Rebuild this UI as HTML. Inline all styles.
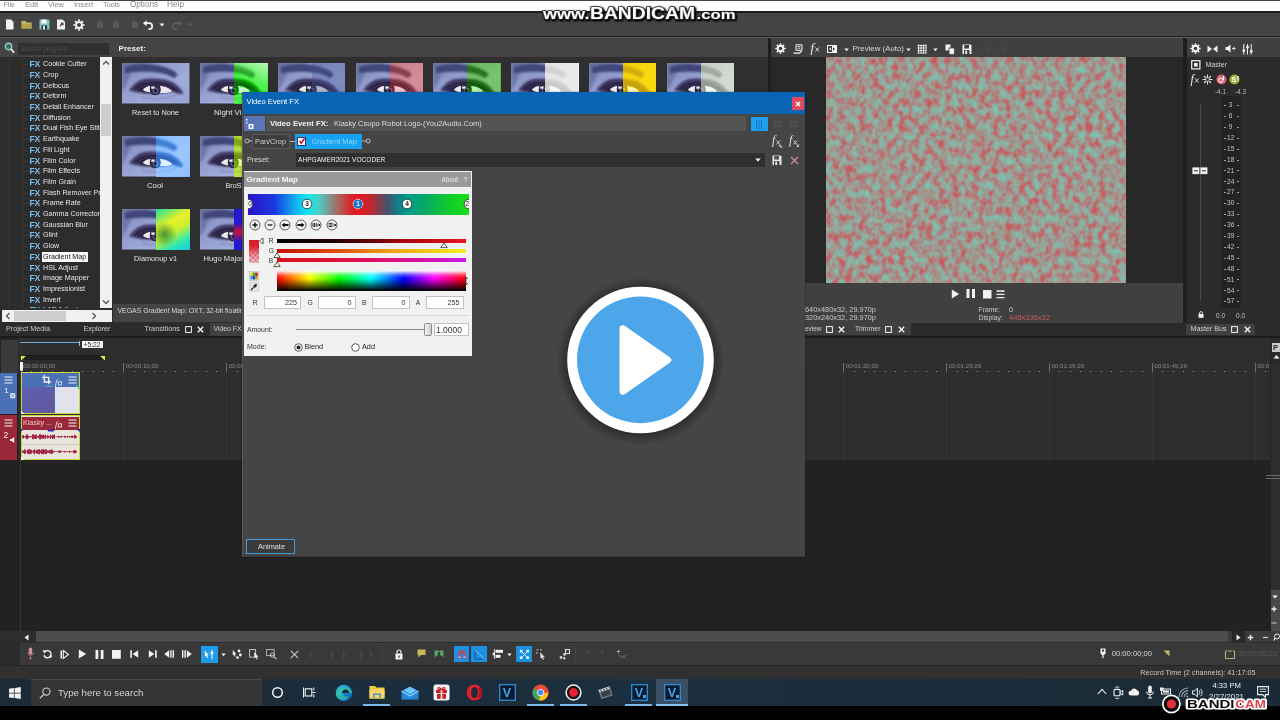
<!DOCTYPE html>
<html><head><meta charset="utf-8"><title>VEGAS Pro - Video Event FX</title>
<style>
html,body{margin:0;padding:0;background:#000;}
body{width:1280px;height:720px;position:relative;overflow:hidden;font-family:"Liberation Sans",sans-serif;}
body div,body span,body svg{position:absolute;}
span{white-space:nowrap;}
svg{overflow:visible;}
#v{left:0;top:0;width:1280px;height:720px;overflow:hidden;filter:blur(0.4px);}
</style></head><body>
<div id="v">
<div style="left:0px;top:0px;width:1280px;height:720px;background:#2d2d2d;"></div>
<div style="left:0px;top:0px;width:1280px;height:11px;background:#ffffff;border-top:1px solid #444;box-sizing:border-box;"></div>
<span style="left:3.5px;top:-0.6px;font-size:7.14px;line-height:12px;color:#858585;">File</span>
<span style="left:25px;top:-0.6px;font-size:7.54px;line-height:12px;color:#858585;">Edit</span>
<span style="left:48px;top:-0.6px;font-size:7.44px;line-height:12px;color:#858585;">View</span>
<span style="left:74px;top:-0.6px;font-size:7.6px;line-height:12px;color:#858585;">Insert</span>
<span style="left:103px;top:-0.6px;font-size:7.28px;line-height:12px;color:#858585;">Tools</span>
<span style="left:130px;top:-0.6px;font-size:8.13px;line-height:12px;color:#858585;">Options</span>
<span style="left:167px;top:-0.6px;font-size:8.27px;line-height:12px;color:#858585;">Help</span>
<div style="left:0px;top:11px;width:1280px;height:1.5px;background:#1c1c1c;"></div>
<div style="left:0px;top:12.5px;width:1280px;height:23.5px;background:#444444;"></div>
<div style="left:0px;top:35.6px;width:1280px;height:1.6px;background:#202020;"></div>
<div style="left:0px;top:37.2px;width:1280px;height:0.9px;background:#5c5c5c;"></div>
<svg style="left:5px;top:19px;" width="10" height="11" viewBox="0 0 10 11"><path d="M1 0.5h5l2.5 2.5v7.5h-7.5z" fill="#f2f2f2"/></svg>
<svg style="left:21px;top:20px;" width="12" height="9" viewBox="0 0 12 9"><path d="M0.5 1h4l1 1.5h5v6h-10z" fill="#c9b75e"/><path d="M0.5 4h10v4.5h-10z" fill="#b5a24c"/></svg>
<svg style="left:39px;top:19px;" width="11" height="11" viewBox="0 0 11 11"><path d="M0.5 0.5h9l1 1v9h-10z" fill="#7fc4c0"/><rect x="2.5" y="0.5" width="5" height="4" fill="#f4f4f4"/><rect x="2.5" y="6.5" width="5.5" height="4" fill="#2e2e2e"/><rect x="4" y="7" width="2" height="3.5" fill="#e8e8e8"/></svg>
<svg style="left:56px;top:19px;" width="11" height="11" viewBox="0 0 11 11"><path d="M1 0.5h5.5l2.5 2.5v7.5h-8z" fill="#f2f2f2"/><path d="M4 7l3-3m0 0h-2.2m2.2 0v2.2" stroke="#444" stroke-width="1.2" fill="none"/></svg>
<svg style="left:73px;top:18.5px;" width="12" height="12" viewBox="0 0 12 12"><g fill="none" stroke="#f2f2f2"><circle cx="6" cy="6" r="3" stroke-width="2"/><g stroke-width="1.7"><path d="M6 0.3v2M6 9.7v2M0.3 6h2M9.7 6h2M2 2l1.4 1.4M8.6 8.6L10 10M2 10l1.4-1.4M8.6 3.4L10 2"/></g></g></svg>
<svg style="left:96px;top:20px;" width="8" height="9" viewBox="0 0 8 9"><path d="M1 1h4l2 2v5h-6z" fill="#5a5a5a"/></svg>
<svg style="left:112px;top:20px;" width="8" height="9" viewBox="0 0 8 9"><path d="M1 1h4l2 2v5h-6z" fill="#5a5a5a"/></svg>
<svg style="left:131px;top:20px;" width="8" height="9" viewBox="0 0 8 9"><path d="M1 1h4l2 2v5h-6z" fill="#5a5a5a"/></svg>
<svg style="left:143px;top:20px;" width="11" height="9" viewBox="0 0 11 9"><path d="M1 3.2h5.2a3 3 0 0 1 0 6h-0.7" fill="none" stroke="#f2f2f2" stroke-width="1.7"/><path d="M0 3.2l3.6-3v6z" fill="#f2f2f2"/></svg>
<svg style="left:159px;top:23px;" width="6" height="4" viewBox="0 0 6 4"><path d="M0.5 0.5h5l-2.5 3z" fill="#f2f2f2"/></svg>
<svg style="left:171px;top:20px;" width="11" height="9" viewBox="0 0 11 9"><path d="M10 3.2h-5.2a3 3 0 0 0 0 6h0.7" fill="none" stroke="#5e5e5e" stroke-width="1.7"/><path d="M11 3.2l-3.6-3v6z" fill="#5e5e5e"/></svg>
<svg style="left:187px;top:23px;" width="6" height="4" viewBox="0 0 6 4"><path d="M0.5 0.5h5l-2.5 3z" fill="#5e5e5e"/></svg>
<div style="left:0px;top:38px;width:769px;height:19px;background:#434343;"></div>
<div style="left:0px;top:57px;width:113px;height:265px;background:#2d2d2d;"></div>
<div style="left:113px;top:57px;width:656px;height:247px;background:#2f2f2f;"></div>
<div style="left:113px;top:303.5px;width:656px;height:18.5px;background:#444444;"></div>
<svg style="left:4px;top:42px;" width="11" height="12" viewBox="0 0 11 12"><circle cx="4.5" cy="4.5" r="3.2" fill="#3d6e68" stroke="#8fd0c8" stroke-width="1.4"/><path d="M7 7.2l3.2 3.4" stroke="#e8e8e8" stroke-width="1.8"/></svg>
<div style="left:18px;top:43px;width:91px;height:12px;background:#303030;"></div>
<span style="left:20px;top:42.5px;font-size:6.76px;line-height:12px;color:#4c4c4c;">Search plug-ins</span>
<span style="left:118.5px;top:42.5px;font-size:8.11px;line-height:12px;color:#f0f0f0;font-weight:bold;">Preset:</span>
<div style="left:9px;top:57px;width:1px;height:251px;background:#3a3a3a;"></div>
<div style="left:22px;top:57px;width:1px;height:251px;background:#3a3a3a;"></div>
<div style="left:0;top:57px;width:100px;height:251px;overflow:hidden">
<div style="left:23px;top:7.2px;width:5px;height:1px;background:#4a3432"></div>
<span style="left:29.5px;top:1.2px;font-size:8.6px;line-height:12px;font-weight:bold;color:#79bfee;letter-spacing:-0.3px">FX</span>
<span style="left:43px;top:1.2px;font-size:7.15px;line-height:12px;color:#e6e6e6">Cookie Cutter</span>
<div style="left:23px;top:17.9px;width:5px;height:1px;background:#4a3432"></div>
<span style="left:29.5px;top:11.9px;font-size:8.6px;line-height:12px;font-weight:bold;color:#79bfee;letter-spacing:-0.3px">FX</span>
<span style="left:43px;top:11.9px;font-size:7.15px;line-height:12px;color:#e6e6e6">Crop</span>
<div style="left:23px;top:28.6px;width:5px;height:1px;background:#4a3432"></div>
<span style="left:29.5px;top:22.6px;font-size:8.6px;line-height:12px;font-weight:bold;color:#79bfee;letter-spacing:-0.3px">FX</span>
<span style="left:43px;top:22.6px;font-size:7.15px;line-height:12px;color:#e6e6e6">Defocus</span>
<div style="left:23px;top:39.3px;width:5px;height:1px;background:#4a3432"></div>
<span style="left:29.5px;top:33.3px;font-size:8.6px;line-height:12px;font-weight:bold;color:#79bfee;letter-spacing:-0.3px">FX</span>
<span style="left:43px;top:33.3px;font-size:7.15px;line-height:12px;color:#e6e6e6">Deform</span>
<div style="left:23px;top:50.0px;width:5px;height:1px;background:#4a3432"></div>
<span style="left:29.5px;top:44.0px;font-size:8.6px;line-height:12px;font-weight:bold;color:#79bfee;letter-spacing:-0.3px">FX</span>
<span style="left:43px;top:44.0px;font-size:7.15px;line-height:12px;color:#e6e6e6">Detail Enhancer</span>
<div style="left:23px;top:60.7px;width:5px;height:1px;background:#4a3432"></div>
<span style="left:29.5px;top:54.7px;font-size:8.6px;line-height:12px;font-weight:bold;color:#79bfee;letter-spacing:-0.3px">FX</span>
<span style="left:43px;top:54.7px;font-size:7.15px;line-height:12px;color:#e6e6e6">Diffusion</span>
<div style="left:23px;top:71.4px;width:5px;height:1px;background:#4a3432"></div>
<span style="left:29.5px;top:65.4px;font-size:8.6px;line-height:12px;font-weight:bold;color:#79bfee;letter-spacing:-0.3px">FX</span>
<span style="left:43px;top:65.4px;font-size:7.15px;line-height:12px;color:#e6e6e6">Dual Fish Eye Stitch</span>
<div style="left:23px;top:82.1px;width:5px;height:1px;background:#4a3432"></div>
<span style="left:29.5px;top:76.1px;font-size:8.6px;line-height:12px;font-weight:bold;color:#79bfee;letter-spacing:-0.3px">FX</span>
<span style="left:43px;top:76.1px;font-size:7.15px;line-height:12px;color:#e6e6e6">Earthquake</span>
<div style="left:23px;top:92.8px;width:5px;height:1px;background:#4a3432"></div>
<span style="left:29.5px;top:86.8px;font-size:8.6px;line-height:12px;font-weight:bold;color:#79bfee;letter-spacing:-0.3px">FX</span>
<span style="left:43px;top:86.8px;font-size:7.15px;line-height:12px;color:#e6e6e6">Fill Light</span>
<div style="left:23px;top:103.5px;width:5px;height:1px;background:#4a3432"></div>
<span style="left:29.5px;top:97.5px;font-size:8.6px;line-height:12px;font-weight:bold;color:#79bfee;letter-spacing:-0.3px">FX</span>
<span style="left:43px;top:97.5px;font-size:7.15px;line-height:12px;color:#e6e6e6">Film Color</span>
<div style="left:23px;top:114.2px;width:5px;height:1px;background:#4a3432"></div>
<span style="left:29.5px;top:108.2px;font-size:8.6px;line-height:12px;font-weight:bold;color:#79bfee;letter-spacing:-0.3px">FX</span>
<span style="left:43px;top:108.2px;font-size:7.15px;line-height:12px;color:#e6e6e6">Film Effects</span>
<div style="left:23px;top:124.9px;width:5px;height:1px;background:#4a3432"></div>
<span style="left:29.5px;top:118.9px;font-size:8.6px;line-height:12px;font-weight:bold;color:#79bfee;letter-spacing:-0.3px">FX</span>
<span style="left:43px;top:118.9px;font-size:7.15px;line-height:12px;color:#e6e6e6">Film Grain</span>
<div style="left:23px;top:135.6px;width:5px;height:1px;background:#4a3432"></div>
<span style="left:29.5px;top:129.6px;font-size:8.6px;line-height:12px;font-weight:bold;color:#79bfee;letter-spacing:-0.3px">FX</span>
<span style="left:43px;top:129.6px;font-size:7.15px;line-height:12px;color:#e6e6e6">Flash Remover Pro</span>
<div style="left:23px;top:146.3px;width:5px;height:1px;background:#4a3432"></div>
<span style="left:29.5px;top:140.3px;font-size:8.6px;line-height:12px;font-weight:bold;color:#79bfee;letter-spacing:-0.3px">FX</span>
<span style="left:43px;top:140.3px;font-size:7.15px;line-height:12px;color:#e6e6e6">Frame Rate</span>
<div style="left:23px;top:157.0px;width:5px;height:1px;background:#4a3432"></div>
<span style="left:29.5px;top:151.0px;font-size:8.6px;line-height:12px;font-weight:bold;color:#79bfee;letter-spacing:-0.3px">FX</span>
<span style="left:43px;top:151.0px;font-size:7.15px;line-height:12px;color:#e6e6e6">Gamma Corrector</span>
<div style="left:23px;top:167.7px;width:5px;height:1px;background:#4a3432"></div>
<span style="left:29.5px;top:161.7px;font-size:8.6px;line-height:12px;font-weight:bold;color:#79bfee;letter-spacing:-0.3px">FX</span>
<span style="left:43px;top:161.7px;font-size:7.15px;line-height:12px;color:#e6e6e6">Gaussian Blur</span>
<div style="left:23px;top:178.4px;width:5px;height:1px;background:#4a3432"></div>
<span style="left:29.5px;top:172.4px;font-size:8.6px;line-height:12px;font-weight:bold;color:#79bfee;letter-spacing:-0.3px">FX</span>
<span style="left:43px;top:172.4px;font-size:7.15px;line-height:12px;color:#e6e6e6">Glint</span>
<div style="left:23px;top:189.1px;width:5px;height:1px;background:#4a3432"></div>
<span style="left:29.5px;top:183.1px;font-size:8.6px;line-height:12px;font-weight:bold;color:#79bfee;letter-spacing:-0.3px">FX</span>
<span style="left:43px;top:183.1px;font-size:7.15px;line-height:12px;color:#e6e6e6">Glow</span>
<div style="left:23px;top:199.8px;width:5px;height:1px;background:#4a3432"></div>
<div style="left:42px;top:194.8px;width:46px;height:10.5px;background:#fafafa"></div>
<span style="left:29.5px;top:193.8px;font-size:8.6px;line-height:12px;font-weight:bold;color:#79bfee;letter-spacing:-0.3px">FX</span>
<span style="left:43px;top:193.8px;font-size:7.15px;line-height:12px;color:#111">Gradient Map</span>
<div style="left:23px;top:210.5px;width:5px;height:1px;background:#4a3432"></div>
<span style="left:29.5px;top:204.5px;font-size:8.6px;line-height:12px;font-weight:bold;color:#79bfee;letter-spacing:-0.3px">FX</span>
<span style="left:43px;top:204.5px;font-size:7.15px;line-height:12px;color:#e6e6e6">HSL Adjust</span>
<div style="left:23px;top:221.2px;width:5px;height:1px;background:#4a3432"></div>
<span style="left:29.5px;top:215.2px;font-size:8.6px;line-height:12px;font-weight:bold;color:#79bfee;letter-spacing:-0.3px">FX</span>
<span style="left:43px;top:215.2px;font-size:7.15px;line-height:12px;color:#e6e6e6">Image Mapper</span>
<div style="left:23px;top:231.9px;width:5px;height:1px;background:#4a3432"></div>
<span style="left:29.5px;top:225.9px;font-size:8.6px;line-height:12px;font-weight:bold;color:#79bfee;letter-spacing:-0.3px">FX</span>
<span style="left:43px;top:225.9px;font-size:7.15px;line-height:12px;color:#e6e6e6">Impressionist</span>
<div style="left:23px;top:242.6px;width:5px;height:1px;background:#4a3432"></div>
<span style="left:29.5px;top:236.6px;font-size:8.6px;line-height:12px;font-weight:bold;color:#79bfee;letter-spacing:-0.3px">FX</span>
<span style="left:43px;top:236.6px;font-size:7.15px;line-height:12px;color:#e6e6e6">Invert</span>
<div style="left:23px;top:253.3px;width:5px;height:1px;background:#4a3432"></div>
<span style="left:29.5px;top:247.3px;font-size:8.6px;line-height:12px;font-weight:bold;color:#79bfee;letter-spacing:-0.3px">FX</span>
<span style="left:43px;top:247.3px;font-size:7.15px;line-height:12px;color:#e6e6e6">LAB Adjust</span>
</div>
<div style="left:100px;top:57px;width:12px;height:251px;background:#f1f1f1;"></div>
<div style="left:101px;top:104px;width:10px;height:32px;background:#cdcdcd;"></div>
<svg style="left:102px;top:60px;" width="8" height="6" viewBox="0 0 8 6"><path d="M1 4.5l3-3 3 3" fill="none" stroke="#555" stroke-width="1.3"/></svg>
<svg style="left:102px;top:299px;" width="8" height="6" viewBox="0 0 8 6"><path d="M1 1.5l3 3 3-3" fill="none" stroke="#555" stroke-width="1.3"/></svg>
<div style="left:2px;top:310px;width:110px;height:12px;background:#f1f1f1;"></div>
<div style="left:14px;top:311px;width:52px;height:10px;background:#cdcdcd;"></div>
<svg style="left:5px;top:312px;" width="6" height="8" viewBox="0 0 6 8"><path d="M4.5 1l-3 3 3 3" fill="none" stroke="#555" stroke-width="1.3"/></svg>
<svg style="left:91px;top:312px;" width="6" height="8" viewBox="0 0 6 8"><path d="M1.5 1l3 3-3 3" fill="none" stroke="#555" stroke-width="1.3"/></svg>
<span style="left:117.5px;top:304.5px;font-size:6.9px;line-height:12px;color:#d8d8d8;">VEGAS Gradient Map: OXT, 32-bit floating point, GPU Accelerated</span>
<svg width="0" height="0" style="left:0;top:0"><defs>
<linearGradient id="eg" x1="0" y1="0" x2="1" y2="0.9"><stop offset="0" stop-color="#76809f"/><stop offset="0.3" stop-color="#8f9acb"/><stop offset="0.7" stop-color="#a0acda"/><stop offset="1" stop-color="#97a3d4"/></linearGradient>
<filter id="eb" x="-10%" y="-10%" width="120%" height="120%"><feGaussianBlur stdDeviation="1.1"/></filter>
<filter id="eb2" x="-10%" y="-10%" width="120%" height="120%"><feGaussianBlur stdDeviation="0.5"/></filter>
</defs></svg>
<div style="left:122.4px;top:63px;width:67.5px;height:40.5px;overflow:hidden;isolation:isolate"><svg width="67.5" height="40.5" viewBox="0 0 68 40" preserveAspectRatio="none" style="left:0;top:0">
<rect width="68" height="40" fill="url(#eg)"/>
<g filter="url(#eb)">
<path d="M0 0h30l-20 8l-6 14l-4 6z" fill="#5a6498" opacity="0.55"/>
<path d="M3 4c10-4 28-4 40 0s12 6 13 8l-4 3c-8-6-24-8-49-5z" fill="#40457a" opacity="1"/>
<path d="M7 27c5-7 11-11 18-11.500s19-0.500 26 3.500s9 8 11 11c-5 1.500-9-0.500-13-3c-10 4-28 5-42 0z" fill="#38305c" opacity="0.95"/>
<path d="M14 26c7-6 28-7 40 1c-8 4-30 5-40-1z" fill="#2c2644"/>
<path d="M20 34c10 2 24 2 36-3" fill="none" stroke="#7680b4" stroke-width="2" opacity="0.6"/>
</g>
<g filter="url(#eb2)">
<path d="M21 26.500c2-2.500 4.500-3.500 7.500-3.800l0 6.300c-3 0-6-1-7.500-2.500z" fill="#f1ebee"/>
<path d="M38 22.800c5 0 10 2.200 12.500 5c-3.500 1.800-8 2.200-12.500 1.800z" fill="#ece6ec"/>
<circle cx="33.500" cy="26.300" r="5.600" fill="#2a2a46"/>
<circle cx="33.800" cy="27.300" r="3" fill="#565c86"/>
<circle cx="33.800" cy="27.300" r="1.500" fill="#1c1a2c"/>
<path d="M29.500 23.200l4 0-1.500 2.200-2.500 0z" fill="#f4f0f4"/>
<path d="M13 25.500c8-7.500 30-8.500 42 1.500" fill="none" stroke="#2a2240" stroke-width="1.700"/>
</g>
</svg></div>
<div style="left:200.15px;top:63px;width:67.5px;height:40.5px;overflow:hidden;isolation:isolate"><svg width="67.5" height="40.5" viewBox="0 0 68 40" preserveAspectRatio="none" style="left:0;top:0">
<rect width="68" height="40" fill="url(#eg)"/>
<g filter="url(#eb)">
<path d="M0 0h30l-20 8l-6 14l-4 6z" fill="#5a6498" opacity="0.55"/>
<path d="M3 4c10-4 28-4 40 0s12 6 13 8l-4 3c-8-6-24-8-49-5z" fill="#40457a" opacity="1"/>
<path d="M7 27c5-7 11-11 18-11.500s19-0.500 26 3.500s9 8 11 11c-5 1.500-9-0.500-13-3c-10 4-28 5-42 0z" fill="#38305c" opacity="0.95"/>
<path d="M14 26c7-6 28-7 40 1c-8 4-30 5-40-1z" fill="#2c2644"/>
<path d="M20 34c10 2 24 2 36-3" fill="none" stroke="#7680b4" stroke-width="2" opacity="0.6"/>
</g>
<g filter="url(#eb2)">
<path d="M21 26.500c2-2.500 4.500-3.500 7.500-3.800l0 6.300c-3 0-6-1-7.500-2.500z" fill="#f1ebee"/>
<path d="M38 22.800c5 0 10 2.200 12.500 5c-3.500 1.800-8 2.200-12.500 1.800z" fill="#ece6ec"/>
<circle cx="33.500" cy="26.300" r="5.600" fill="#2a2a46"/>
<circle cx="33.800" cy="27.300" r="3" fill="#565c86"/>
<circle cx="33.800" cy="27.300" r="1.500" fill="#1c1a2c"/>
<path d="M29.500 23.200l4 0-1.500 2.200-2.500 0z" fill="#f4f0f4"/>
<path d="M13 25.500c8-7.500 30-8.500 42 1.500" fill="none" stroke="#2a2240" stroke-width="1.700"/>
</g>
</svg><div style="left:34px;top:0;width:33.5px;height:40.5px;background:#22cc22;mix-blend-mode:color"></div><div style="left:34px;top:0;width:33.5px;height:40.5px;background:rgba(60,230,60,0.2);mix-blend-mode:screen"></div><div style="left:34px;top:0;width:33.5px;height:40.5px;background:linear-gradient(200deg,rgba(255,255,255,0.6),rgba(255,255,255,0) 45%);mix-blend-mode:normal"></div></div>
<div style="left:277.9px;top:63px;width:67.5px;height:40.5px;overflow:hidden;isolation:isolate"><svg width="67.5" height="40.5" viewBox="0 0 68 40" preserveAspectRatio="none" style="left:0;top:0">
<rect width="68" height="40" fill="url(#eg)"/>
<g filter="url(#eb)">
<path d="M0 0h30l-20 8l-6 14l-4 6z" fill="#5a6498" opacity="0.55"/>
<path d="M3 4c10-4 28-4 40 0s12 6 13 8l-4 3c-8-6-24-8-49-5z" fill="#40457a" opacity="1"/>
<path d="M7 27c5-7 11-11 18-11.500s19-0.500 26 3.500s9 8 11 11c-5 1.500-9-0.500-13-3c-10 4-28 5-42 0z" fill="#38305c" opacity="0.95"/>
<path d="M14 26c7-6 28-7 40 1c-8 4-30 5-40-1z" fill="#2c2644"/>
<path d="M20 34c10 2 24 2 36-3" fill="none" stroke="#7680b4" stroke-width="2" opacity="0.6"/>
</g>
<g filter="url(#eb2)">
<path d="M21 26.500c2-2.500 4.500-3.500 7.500-3.800l0 6.300c-3 0-6-1-7.500-2.500z" fill="#f1ebee"/>
<path d="M38 22.800c5 0 10 2.200 12.500 5c-3.500 1.800-8 2.200-12.500 1.800z" fill="#ece6ec"/>
<circle cx="33.500" cy="26.300" r="5.600" fill="#2a2a46"/>
<circle cx="33.800" cy="27.300" r="3" fill="#565c86"/>
<circle cx="33.800" cy="27.300" r="1.500" fill="#1c1a2c"/>
<path d="M29.500 23.200l4 0-1.500 2.200-2.500 0z" fill="#f4f0f4"/>
<path d="M13 25.500c8-7.500 30-8.500 42 1.500" fill="none" stroke="#2a2240" stroke-width="1.700"/>
</g>
</svg><div style="left:34px;top:0;width:33.5px;height:40.5px;background:rgba(70,84,150,0.35);mix-blend-mode:normal"></div></div>
<div style="left:355.65px;top:63px;width:67.5px;height:40.5px;overflow:hidden;isolation:isolate"><svg width="67.5" height="40.5" viewBox="0 0 68 40" preserveAspectRatio="none" style="left:0;top:0">
<rect width="68" height="40" fill="url(#eg)"/>
<g filter="url(#eb)">
<path d="M0 0h30l-20 8l-6 14l-4 6z" fill="#5a6498" opacity="0.55"/>
<path d="M3 4c10-4 28-4 40 0s12 6 13 8l-4 3c-8-6-24-8-49-5z" fill="#40457a" opacity="1"/>
<path d="M7 27c5-7 11-11 18-11.500s19-0.500 26 3.500s9 8 11 11c-5 1.500-9-0.500-13-3c-10 4-28 5-42 0z" fill="#38305c" opacity="0.95"/>
<path d="M14 26c7-6 28-7 40 1c-8 4-30 5-40-1z" fill="#2c2644"/>
<path d="M20 34c10 2 24 2 36-3" fill="none" stroke="#7680b4" stroke-width="2" opacity="0.6"/>
</g>
<g filter="url(#eb2)">
<path d="M21 26.500c2-2.500 4.500-3.500 7.500-3.800l0 6.300c-3 0-6-1-7.500-2.500z" fill="#f1ebee"/>
<path d="M38 22.800c5 0 10 2.200 12.500 5c-3.500 1.800-8 2.200-12.500 1.800z" fill="#ece6ec"/>
<circle cx="33.500" cy="26.300" r="5.600" fill="#2a2a46"/>
<circle cx="33.800" cy="27.300" r="3" fill="#565c86"/>
<circle cx="33.800" cy="27.300" r="1.500" fill="#1c1a2c"/>
<path d="M29.500 23.200l4 0-1.500 2.200-2.500 0z" fill="#f4f0f4"/>
<path d="M13 25.500c8-7.500 30-8.500 42 1.500" fill="none" stroke="#2a2240" stroke-width="1.700"/>
</g>
</svg><div style="left:34px;top:0;width:33.5px;height:40.5px;background:#a86070;mix-blend-mode:color"></div><div style="left:34px;top:0;width:33.5px;height:40.5px;background:rgba(180,104,118,0.22);mix-blend-mode:normal"></div></div>
<div style="left:433.4px;top:63px;width:67.5px;height:40.5px;overflow:hidden;isolation:isolate"><svg width="67.5" height="40.5" viewBox="0 0 68 40" preserveAspectRatio="none" style="left:0;top:0">
<rect width="68" height="40" fill="url(#eg)"/>
<g filter="url(#eb)">
<path d="M0 0h30l-20 8l-6 14l-4 6z" fill="#5a6498" opacity="0.55"/>
<path d="M3 4c10-4 28-4 40 0s12 6 13 8l-4 3c-8-6-24-8-49-5z" fill="#40457a" opacity="1"/>
<path d="M7 27c5-7 11-11 18-11.500s19-0.500 26 3.500s9 8 11 11c-5 1.500-9-0.500-13-3c-10 4-28 5-42 0z" fill="#38305c" opacity="0.95"/>
<path d="M14 26c7-6 28-7 40 1c-8 4-30 5-40-1z" fill="#2c2644"/>
<path d="M20 34c10 2 24 2 36-3" fill="none" stroke="#7680b4" stroke-width="2" opacity="0.6"/>
</g>
<g filter="url(#eb2)">
<path d="M21 26.500c2-2.500 4.500-3.500 7.500-3.800l0 6.300c-3 0-6-1-7.500-2.500z" fill="#f1ebee"/>
<path d="M38 22.800c5 0 10 2.200 12.500 5c-3.500 1.800-8 2.200-12.500 1.800z" fill="#ece6ec"/>
<circle cx="33.500" cy="26.300" r="5.600" fill="#2a2a46"/>
<circle cx="33.800" cy="27.300" r="3" fill="#565c86"/>
<circle cx="33.800" cy="27.300" r="1.500" fill="#1c1a2c"/>
<path d="M29.500 23.200l4 0-1.500 2.200-2.500 0z" fill="#f4f0f4"/>
<path d="M13 25.500c8-7.500 30-8.500 42 1.500" fill="none" stroke="#2a2240" stroke-width="1.700"/>
</g>
</svg><div style="left:34px;top:0;width:33.5px;height:40.5px;background:#4f9a45;mix-blend-mode:color"></div><div style="left:34px;top:0;width:33.5px;height:40.5px;background:rgba(90,160,80,0.18);mix-blend-mode:normal"></div></div>
<div style="left:511.15px;top:63px;width:67.5px;height:40.5px;overflow:hidden;isolation:isolate"><svg width="67.5" height="40.5" viewBox="0 0 68 40" preserveAspectRatio="none" style="left:0;top:0">
<rect width="68" height="40" fill="url(#eg)"/>
<g filter="url(#eb)">
<path d="M0 0h30l-20 8l-6 14l-4 6z" fill="#5a6498" opacity="0.55"/>
<path d="M3 4c10-4 28-4 40 0s12 6 13 8l-4 3c-8-6-24-8-49-5z" fill="#40457a" opacity="1"/>
<path d="M7 27c5-7 11-11 18-11.500s19-0.500 26 3.500s9 8 11 11c-5 1.500-9-0.500-13-3c-10 4-28 5-42 0z" fill="#38305c" opacity="0.95"/>
<path d="M14 26c7-6 28-7 40 1c-8 4-30 5-40-1z" fill="#2c2644"/>
<path d="M20 34c10 2 24 2 36-3" fill="none" stroke="#7680b4" stroke-width="2" opacity="0.6"/>
</g>
<g filter="url(#eb2)">
<path d="M21 26.500c2-2.500 4.500-3.500 7.500-3.800l0 6.300c-3 0-6-1-7.500-2.500z" fill="#f1ebee"/>
<path d="M38 22.800c5 0 10 2.200 12.500 5c-3.500 1.800-8 2.200-12.500 1.800z" fill="#ece6ec"/>
<circle cx="33.500" cy="26.300" r="5.600" fill="#2a2a46"/>
<circle cx="33.800" cy="27.300" r="3" fill="#565c86"/>
<circle cx="33.800" cy="27.300" r="1.500" fill="#1c1a2c"/>
<path d="M29.500 23.200l4 0-1.500 2.200-2.500 0z" fill="#f4f0f4"/>
<path d="M13 25.500c8-7.500 30-8.500 42 1.500" fill="none" stroke="#2a2240" stroke-width="1.700"/>
</g>
</svg><div style="left:34px;top:0;width:33.5px;height:40.5px;background:#ffffff;mix-blend-mode:color"></div><div style="left:34px;top:0;width:33.5px;height:40.5px;background:rgba(255,255,255,0.75);mix-blend-mode:screen"></div></div>
<div style="left:588.9px;top:63px;width:67.5px;height:40.5px;overflow:hidden;isolation:isolate"><svg width="67.5" height="40.5" viewBox="0 0 68 40" preserveAspectRatio="none" style="left:0;top:0">
<rect width="68" height="40" fill="url(#eg)"/>
<g filter="url(#eb)">
<path d="M0 0h30l-20 8l-6 14l-4 6z" fill="#5a6498" opacity="0.55"/>
<path d="M3 4c10-4 28-4 40 0s12 6 13 8l-4 3c-8-6-24-8-49-5z" fill="#40457a" opacity="1"/>
<path d="M7 27c5-7 11-11 18-11.500s19-0.500 26 3.500s9 8 11 11c-5 1.500-9-0.500-13-3c-10 4-28 5-42 0z" fill="#38305c" opacity="0.95"/>
<path d="M14 26c7-6 28-7 40 1c-8 4-30 5-40-1z" fill="#2c2644"/>
<path d="M20 34c10 2 24 2 36-3" fill="none" stroke="#7680b4" stroke-width="2" opacity="0.6"/>
</g>
<g filter="url(#eb2)">
<path d="M21 26.500c2-2.500 4.500-3.500 7.500-3.800l0 6.300c-3 0-6-1-7.500-2.500z" fill="#f1ebee"/>
<path d="M38 22.800c5 0 10 2.200 12.500 5c-3.500 1.800-8 2.200-12.500 1.800z" fill="#ece6ec"/>
<circle cx="33.500" cy="26.300" r="5.600" fill="#2a2a46"/>
<circle cx="33.800" cy="27.300" r="3" fill="#565c86"/>
<circle cx="33.800" cy="27.300" r="1.500" fill="#1c1a2c"/>
<path d="M29.500 23.200l4 0-1.500 2.200-2.500 0z" fill="#f4f0f4"/>
<path d="M13 25.500c8-7.500 30-8.500 42 1.500" fill="none" stroke="#2a2240" stroke-width="1.700"/>
</g>
</svg><div style="left:34px;top:0;width:33.5px;height:40.5px;background:#ffbe10;mix-blend-mode:color"></div><div style="left:34px;top:0;width:33.5px;height:40.5px;background:rgba(255,200,20,0.7);mix-blend-mode:screen"></div></div>
<div style="left:666.65px;top:63px;width:67.5px;height:40.5px;overflow:hidden;isolation:isolate"><svg width="67.5" height="40.5" viewBox="0 0 68 40" preserveAspectRatio="none" style="left:0;top:0">
<rect width="68" height="40" fill="url(#eg)"/>
<g filter="url(#eb)">
<path d="M0 0h30l-20 8l-6 14l-4 6z" fill="#5a6498" opacity="0.55"/>
<path d="M3 4c10-4 28-4 40 0s12 6 13 8l-4 3c-8-6-24-8-49-5z" fill="#40457a" opacity="1"/>
<path d="M7 27c5-7 11-11 18-11.500s19-0.500 26 3.500s9 8 11 11c-5 1.500-9-0.500-13-3c-10 4-28 5-42 0z" fill="#38305c" opacity="0.95"/>
<path d="M14 26c7-6 28-7 40 1c-8 4-30 5-40-1z" fill="#2c2644"/>
<path d="M20 34c10 2 24 2 36-3" fill="none" stroke="#7680b4" stroke-width="2" opacity="0.6"/>
</g>
<g filter="url(#eb2)">
<path d="M21 26.500c2-2.500 4.500-3.500 7.500-3.800l0 6.300c-3 0-6-1-7.500-2.500z" fill="#f1ebee"/>
<path d="M38 22.800c5 0 10 2.200 12.500 5c-3.500 1.800-8 2.200-12.500 1.800z" fill="#ece6ec"/>
<circle cx="33.500" cy="26.300" r="5.600" fill="#2a2a46"/>
<circle cx="33.800" cy="27.300" r="3" fill="#565c86"/>
<circle cx="33.800" cy="27.300" r="1.500" fill="#1c1a2c"/>
<path d="M29.500 23.200l4 0-1.500 2.200-2.500 0z" fill="#f4f0f4"/>
<path d="M13 25.500c8-7.500 30-8.500 42 1.500" fill="none" stroke="#2a2240" stroke-width="1.700"/>
</g>
</svg><div style="left:34px;top:0;width:33.5px;height:40.5px;background:#e0e8e0;mix-blend-mode:color"></div><div style="left:34px;top:0;width:33.5px;height:40.5px;background:rgba(232,240,232,0.55);mix-blend-mode:screen"></div></div>
<div style="left:122.4px;top:136px;width:67.5px;height:40.5px;overflow:hidden;isolation:isolate"><svg width="67.5" height="40.5" viewBox="0 0 68 40" preserveAspectRatio="none" style="left:0;top:0">
<rect width="68" height="40" fill="url(#eg)"/>
<g filter="url(#eb)">
<path d="M0 0h30l-20 8l-6 14l-4 6z" fill="#5a6498" opacity="0.55"/>
<path d="M3 4c10-4 28-4 40 0s12 6 13 8l-4 3c-8-6-24-8-49-5z" fill="#40457a" opacity="1"/>
<path d="M7 27c5-7 11-11 18-11.500s19-0.500 26 3.500s9 8 11 11c-5 1.500-9-0.500-13-3c-10 4-28 5-42 0z" fill="#38305c" opacity="0.95"/>
<path d="M14 26c7-6 28-7 40 1c-8 4-30 5-40-1z" fill="#2c2644"/>
<path d="M20 34c10 2 24 2 36-3" fill="none" stroke="#7680b4" stroke-width="2" opacity="0.6"/>
</g>
<g filter="url(#eb2)">
<path d="M21 26.500c2-2.500 4.500-3.500 7.500-3.800l0 6.300c-3 0-6-1-7.500-2.500z" fill="#f1ebee"/>
<path d="M38 22.800c5 0 10 2.200 12.500 5c-3.500 1.800-8 2.200-12.500 1.800z" fill="#ece6ec"/>
<circle cx="33.500" cy="26.300" r="5.600" fill="#2a2a46"/>
<circle cx="33.800" cy="27.300" r="3" fill="#565c86"/>
<circle cx="33.800" cy="27.300" r="1.500" fill="#1c1a2c"/>
<path d="M29.500 23.200l4 0-1.500 2.200-2.500 0z" fill="#f4f0f4"/>
<path d="M13 25.500c8-7.500 30-8.500 42 1.500" fill="none" stroke="#2a2240" stroke-width="1.700"/>
</g>
</svg><div style="left:34px;top:0;width:33.5px;height:40.5px;background:#5c96ff;mix-blend-mode:color"></div><div style="left:34px;top:0;width:33.5px;height:40.5px;background:rgba(120,175,255,0.4);mix-blend-mode:screen"></div></div>
<div style="left:200.15px;top:136px;width:67.5px;height:40.5px;overflow:hidden;isolation:isolate"><svg width="67.5" height="40.5" viewBox="0 0 68 40" preserveAspectRatio="none" style="left:0;top:0">
<rect width="68" height="40" fill="url(#eg)"/>
<g filter="url(#eb)">
<path d="M0 0h30l-20 8l-6 14l-4 6z" fill="#5a6498" opacity="0.55"/>
<path d="M3 4c10-4 28-4 40 0s12 6 13 8l-4 3c-8-6-24-8-49-5z" fill="#40457a" opacity="1"/>
<path d="M7 27c5-7 11-11 18-11.500s19-0.500 26 3.500s9 8 11 11c-5 1.500-9-0.500-13-3c-10 4-28 5-42 0z" fill="#38305c" opacity="0.95"/>
<path d="M14 26c7-6 28-7 40 1c-8 4-30 5-40-1z" fill="#2c2644"/>
<path d="M20 34c10 2 24 2 36-3" fill="none" stroke="#7680b4" stroke-width="2" opacity="0.6"/>
</g>
<g filter="url(#eb2)">
<path d="M21 26.500c2-2.500 4.500-3.500 7.500-3.800l0 6.300c-3 0-6-1-7.500-2.500z" fill="#f1ebee"/>
<path d="M38 22.800c5 0 10 2.200 12.500 5c-3.500 1.800-8 2.200-12.500 1.800z" fill="#ece6ec"/>
<circle cx="33.500" cy="26.300" r="5.600" fill="#2a2a46"/>
<circle cx="33.800" cy="27.300" r="3" fill="#565c86"/>
<circle cx="33.800" cy="27.300" r="1.500" fill="#1c1a2c"/>
<path d="M29.500 23.200l4 0-1.500 2.200-2.500 0z" fill="#f4f0f4"/>
<path d="M13 25.500c8-7.500 30-8.500 42 1.500" fill="none" stroke="#2a2240" stroke-width="1.700"/>
</g>
</svg><div style="left:34px;top:0;width:33.5px;height:40.5px;background:#a6dc3c;mix-blend-mode:color"></div><div style="left:34px;top:0;width:33.5px;height:40.5px;background:rgba(170,225,60,0.5);mix-blend-mode:screen"></div></div>
<div style="left:122.4px;top:209px;width:67.5px;height:40.5px;overflow:hidden;isolation:isolate"><svg width="67.5" height="40.5" viewBox="0 0 68 40" preserveAspectRatio="none" style="left:0;top:0">
<rect width="68" height="40" fill="url(#eg)"/>
<g filter="url(#eb)">
<path d="M0 0h30l-20 8l-6 14l-4 6z" fill="#5a6498" opacity="0.55"/>
<path d="M3 4c10-4 28-4 40 0s12 6 13 8l-4 3c-8-6-24-8-49-5z" fill="#40457a" opacity="1"/>
<path d="M7 27c5-7 11-11 18-11.500s19-0.500 26 3.500s9 8 11 11c-5 1.500-9-0.500-13-3c-10 4-28 5-42 0z" fill="#38305c" opacity="0.95"/>
<path d="M14 26c7-6 28-7 40 1c-8 4-30 5-40-1z" fill="#2c2644"/>
<path d="M20 34c10 2 24 2 36-3" fill="none" stroke="#7680b4" stroke-width="2" opacity="0.6"/>
</g>
<g filter="url(#eb2)">
<path d="M21 26.500c2-2.500 4.500-3.500 7.500-3.800l0 6.300c-3 0-6-1-7.500-2.500z" fill="#f1ebee"/>
<path d="M38 22.800c5 0 10 2.200 12.500 5c-3.500 1.800-8 2.200-12.500 1.800z" fill="#ece6ec"/>
<circle cx="33.500" cy="26.300" r="5.600" fill="#2a2a46"/>
<circle cx="33.800" cy="27.300" r="3" fill="#565c86"/>
<circle cx="33.800" cy="27.300" r="1.500" fill="#1c1a2c"/>
<path d="M29.500 23.200l4 0-1.500 2.200-2.500 0z" fill="#f4f0f4"/>
<path d="M13 25.500c8-7.500 30-8.500 42 1.500" fill="none" stroke="#2a2240" stroke-width="1.700"/>
</g>
</svg><div style="left:34px;top:0;width:33.5px;height:40.5px;background:linear-gradient(150deg,#18e0a0 0%,#e8f028 35%,#c8f030 55%,#30e8b0 78%,#18c8e8 100%);mix-blend-mode:normal"></div><div style="left:34px;top:0;width:33.5px;height:40.5px;background:radial-gradient(ellipse at 25% 62%,rgba(20,120,60,0.75) 0%,rgba(20,120,60,0) 35%);mix-blend-mode:normal"></div></div>
<div style="left:200.15px;top:209px;width:67.5px;height:40.5px;overflow:hidden;isolation:isolate"><svg width="67.5" height="40.5" viewBox="0 0 68 40" preserveAspectRatio="none" style="left:0;top:0">
<rect width="68" height="40" fill="url(#eg)"/>
<g filter="url(#eb)">
<path d="M0 0h30l-20 8l-6 14l-4 6z" fill="#5a6498" opacity="0.55"/>
<path d="M3 4c10-4 28-4 40 0s12 6 13 8l-4 3c-8-6-24-8-49-5z" fill="#40457a" opacity="1"/>
<path d="M7 27c5-7 11-11 18-11.500s19-0.500 26 3.500s9 8 11 11c-5 1.500-9-0.500-13-3c-10 4-28 5-42 0z" fill="#38305c" opacity="0.95"/>
<path d="M14 26c7-6 28-7 40 1c-8 4-30 5-40-1z" fill="#2c2644"/>
<path d="M20 34c10 2 24 2 36-3" fill="none" stroke="#7680b4" stroke-width="2" opacity="0.6"/>
</g>
<g filter="url(#eb2)">
<path d="M21 26.500c2-2.500 4.500-3.500 7.500-3.800l0 6.300c-3 0-6-1-7.500-2.500z" fill="#f1ebee"/>
<path d="M38 22.800c5 0 10 2.200 12.500 5c-3.500 1.800-8 2.200-12.500 1.800z" fill="#ece6ec"/>
<circle cx="33.500" cy="26.300" r="5.600" fill="#2a2a46"/>
<circle cx="33.800" cy="27.300" r="3" fill="#565c86"/>
<circle cx="33.800" cy="27.300" r="1.500" fill="#1c1a2c"/>
<path d="M29.500 23.200l4 0-1.500 2.200-2.500 0z" fill="#f4f0f4"/>
<path d="M13 25.500c8-7.500 30-8.500 42 1.500" fill="none" stroke="#2a2240" stroke-width="1.700"/>
</g>
</svg><div style="left:34px;top:0;width:33.5px;height:40.5px;background:linear-gradient(180deg,#2418d0 0%,#2418d0 35%,#d01030 55%,#2418d0 80%);mix-blend-mode:normal"></div></div>
<span style="left:132.0px;top:107.0px;font-size:7.35px;line-height:12px;color:#e2e2e2;">Reset to None</span>
<span style="left:214px;top:107.0px;font-size:7.9px;line-height:12px;color:#e2e2e2;">Night Vision</span>
<span style="left:147.0px;top:180.0px;font-size:7.78px;line-height:12px;color:#e2e2e2;">Cool</span>
<span style="left:225.5px;top:180.0px;font-size:7.3px;line-height:12px;color:#e2e2e2;">BroSis</span>
<span style="left:134.0px;top:253.0px;font-size:7.3px;line-height:12px;color:#e2e2e2;">Diamonup v1</span>
<span style="left:203.5px;top:253.0px;font-size:7.64px;line-height:12px;color:#e2e2e2;">Hugo Major</span>
<div style="left:768px;top:38px;width:3px;height:285px;background:#1e1e1e;"></div>
<div style="left:1183px;top:38px;width:4px;height:285px;background:#1e1e1e;"></div>
<div style="left:771px;top:38px;width:412px;height:19px;background:#404040;"></div>
<div style="left:771px;top:57px;width:412px;height:226px;background:#282828;"></div>
<div style="left:771px;top:282.5px;width:412px;height:40.5px;background:#404040;"></div>
<svg style="left:826px;top:57px" width="300" height="225.5" viewBox="0 0 300 225.5"><defs>
<filter id="nz" x="0" y="0" width="100%" height="100%" color-interpolation-filters="sRGB">
<feTurbulence type="fractalNoise" baseFrequency="0.15 0.12" numOctaves="2" seed="7" result="n"/>
<feColorMatrix in="n" type="matrix" values="1.3 0 0 0 -0.2  1.3 0 0 0 -0.2  1.3 0 0 0 -0.2  0 0 0 0 1" result="m"/>
<feComponentTransfer in="m" result="t"><feFuncR type="table" tableValues="0.47 0.52 0.58 0.65 0.73 0.79 0.82"/><feFuncG type="table" tableValues="0.78 0.72 0.66 0.56 0.44 0.35 0.31"/><feFuncB type="table" tableValues="0.70 0.66 0.61 0.54 0.44 0.36 0.33"/></feComponentTransfer><feGaussianBlur stdDeviation="0.55"/>
</filter></defs><rect width="300" height="225.5" fill="#a08880"/><rect width="300" height="225.5" filter="url(#nz)"/></svg>
<svg style="left:774.5px;top:43px;" width="11" height="11" viewBox="0 0 12 12"><g fill="none" stroke="#f2f2f2"><circle cx="6" cy="6" r="3" stroke-width="2"/><g stroke-width="1.7"><path d="M6 0.3v2M6 9.7v2M0.3 6h2M9.7 6h2M2 2l1.4 1.4M8.6 8.6L10 10M2 10l1.4-1.4M8.6 3.4L10 2"/></g></g></svg>
<svg style="left:792.5px;top:44px;" width="10" height="10" viewBox="0 0 10 10"><path d="M3 0.8h6v5.5h-6z" fill="none" stroke="#f2f2f2" stroke-width="1"/><path d="M4.5 2.5h3M4.5 4.2h3" stroke="#f2f2f2" stroke-width="0.8"/><path d="M0.5 9.2h6l2-2" stroke="#f2f2f2" stroke-width="1.3" fill="none"/></svg>
<svg style="left:810px;top:42px;" width="12" height="13" viewBox="0 0 12 13"><text x="0.5" y="10" font-family="Liberation Serif,serif" font-style="italic" font-size="12.5" fill="#f2f2f2">f</text><path d="M5.5 5.5l3.5 4M9 5.5l-3.5 4" stroke="#f2f2f2" stroke-width="0.9"/></svg>
<svg style="left:827px;top:44.5px;" width="10" height="8" viewBox="0 0 10 8"><rect x="0.5" y="0.5" width="9" height="7" fill="none" stroke="#f2f2f2" stroke-width="1"/><rect x="5" y="0.5" width="4.5" height="7" fill="#f2f2f2"/><path d="M2 4l2-1.6v3.2z" fill="#f2f2f2"/><path d="M8 4l-2-1.6v3.2z" fill="#333"/></svg>
<svg style="left:843.5px;top:47.5px;" width="5" height="4" viewBox="0 0 5 4"><path d="M0.3 0.5h4.4l-2.2 2.8z" fill="#f2f2f2"/></svg>
<span style="left:852.5px;top:42.5px;font-size:7.85px;line-height:12px;color:#d8d8d8;">Preview (Auto)</span>
<svg style="left:905.5px;top:47.5px;" width="5" height="4" viewBox="0 0 5 4"><path d="M0.3 0.5h4.4l-2.2 2.8z" fill="#f2f2f2"/></svg>
<svg style="left:917px;top:44px;" width="10" height="10" viewBox="0 0 10 10"><path d="M0.5 1.5h9M0.5 4h9M0.5 6.5h9M0.5 9h9M1.5 0.5v9M4 0.5v9M6.5 0.5v9M9 0.5v9" stroke="#f2f2f2" stroke-width="0.9"/></svg>
<svg style="left:932.5px;top:47.5px;" width="5" height="4" viewBox="0 0 5 4"><path d="M0.3 0.5h4.4l-2.2 2.8z" fill="#f2f2f2"/></svg>
<svg style="left:945px;top:43.5px;" width="10" height="11" viewBox="0 0 10 11"><rect x="0.5" y="0.5" width="5" height="6" fill="#f2f2f2"/><rect x="4" y="4" width="5.5" height="6.5" fill="#f2f2f2" stroke="#404040" stroke-width="0.8"/></svg>
<svg style="left:961.5px;top:43.5px;" width="10" height="10.5" viewBox="0 0 10 10.5"><path d="M0.5 0.5h8l1 1v8.5h-9z" fill="#f2f2f2"/><rect x="2.2" y="1" width="4.8" height="3.6" fill="#444"/><rect x="2" y="6" width="5.5" height="4" fill="#404040"/><rect x="3.3" y="6.6" width="1.8" height="3.4" fill="#f2f2f2"/></svg>
<svg style="left:981px;top:44.5px;" width="9" height="8" viewBox="0 0 9 8"><path d="M1 1.5h2M4 1.5h4.5M1 4h2M4 4h4.5M1 6.5h2M4 6.5h4.5" stroke="#4c4c4c" stroke-width="0.9"/></svg>
<svg style="left:997px;top:44.5px;" width="9" height="8" viewBox="0 0 9 8"><path d="M1 1.5h2M4 1.5h4.5M1 4h2M4 4h4.5M1 6.5h2M4 6.5h4.5" stroke="#4c4c4c" stroke-width="0.9"/></svg>
<svg style="left:950.5px;top:288.5px;" width="9" height="10" viewBox="0 0 9 10"><path d="M0.8 0.5l7.4 4.5-7.4 4.5z" fill="#f2f2f2"/></svg>
<svg style="left:966px;top:289px;" width="10" height="9" viewBox="0 0 10 9"><rect x="0.5" y="0" width="3" height="9" fill="#f2f2f2"/><rect x="6" y="0" width="3" height="9" fill="#f2f2f2"/></svg>
<svg style="left:982.5px;top:289.5px;" width="9" height="8.5" viewBox="0 0 9 8.5"><rect x="0" y="0" width="8.5" height="8.5" fill="#f2f2f2"/></svg>
<svg style="left:996px;top:289.5px;" width="9" height="9" viewBox="0 0 9 9"><path d="M0.5 1h8M0.5 4.3h8M0.5 7.6h8" stroke="#f2f2f2" stroke-width="1.3"/></svg>
<span style="left:805px;top:303.7px;font-size:7.38px;line-height:12px;color:#c8c8c8;">640x480x32, 29.970p</span>
<span style="left:805px;top:312.4px;font-size:7.38px;line-height:12px;color:#c8c8c8;">320x240x32, 29.970p</span>
<span style="left:978.5px;top:303.7px;font-size:6.79px;line-height:12px;color:#c8c8c8;">Frame:</span>
<span style="left:1009px;top:303.7px;font-size:7.5px;line-height:12px;color:#c8c8c8;">0</span>
<span style="left:978.5px;top:312.4px;font-size:6.89px;line-height:12px;color:#c8c8c8;">Display:</span>
<span style="left:1009px;top:312.4px;font-size:7.52px;line-height:12px;color:#c05a5a;">448x336x32</span>
<div style="left:1187px;top:38px;width:93px;height:19px;background:#404040;"></div>
<div style="left:1187px;top:57px;width:93px;height:266px;background:#2b2b2b;"></div>
<svg style="left:1189.5px;top:43px;" width="11" height="11" viewBox="0 0 12 12"><g fill="none" stroke="#f2f2f2"><circle cx="6" cy="6" r="3" stroke-width="2"/><g stroke-width="1.7"><path d="M6 0.3v2M6 9.7v2M0.3 6h2M9.7 6h2M2 2l1.4 1.4M8.6 8.6L10 10M2 10l1.4-1.4M8.6 3.4L10 2"/></g></g></svg>
<svg style="left:1207px;top:44.5px;" width="11" height="8" viewBox="0 0 11 8"><path d="M0.5 0.5l4.5 3.5-4.5 3.5zM10.5 0.5l-4.5 3.5 4.5 3.5z" fill="#f2f2f2"/></svg>
<svg style="left:1224.5px;top:44px;" width="11" height="9" viewBox="0 0 11 9"><path d="M0.5 3h2l3-2.5v8l-3-2.5h-2z" fill="#f2f2f2"/><path d="M7 4.5h3.5M8.8 2.8v3.4" stroke="#f2f2f2" stroke-width="0.9"/></svg>
<svg style="left:1241.5px;top:43.5px;" width="11" height="10.5" viewBox="0 0 11 10.5"><path d="M1.8 0v10.5M5.5 0v10.5M9.2 0v10.5" stroke="#f2f2f2" stroke-width="1"/><rect x="0.5" y="5.5" width="2.6" height="2.2" fill="#f2f2f2"/><rect x="4.2" y="2" width="2.6" height="2.2" fill="#f2f2f2"/><rect x="7.9" y="6.2" width="2.6" height="2.2" fill="#f2f2f2"/></svg>
<svg style="left:1191px;top:60px;" width="10" height="10" viewBox="0 0 10 10"><rect x="0.7" y="0.7" width="8.2" height="8.2" fill="none" stroke="#f2f2f2" stroke-width="1.2"/><rect x="3" y="3" width="3.6" height="3.6" fill="#f2f2f2"/></svg>
<span style="left:1205.5px;top:59.0px;font-size:7.04px;line-height:12px;color:#d4d4d4;">Master</span>
<svg style="left:1189.5px;top:73px;" width="11" height="13" viewBox="0 0 11 13"><text x="0.5" y="10" font-family="Liberation Serif,serif" font-style="italic" font-size="12" fill="#f2f2f2">f</text><path d="M5 5.5l3.5 4M8.5 5.5l-3.5 4" stroke="#f2f2f2" stroke-width="0.9"/></svg>
<svg style="left:1202px;top:73.5px;" width="11" height="11" viewBox="0 0 11 11"><g stroke="#e0e0e0" stroke-width="1.1"><path d="M5.5 0.5v10M0.5 5.5h10M2 2l7 7M9 2l-7 7"/></g><circle cx="5.5" cy="5.5" r="1.5" fill="#2b2b2b"/></svg>
<svg style="left:1215.5px;top:73.5px;" width="11" height="11" viewBox="0 0 11 11"><circle cx="5.5" cy="5.5" r="5" fill="#d8647c"/><circle cx="4.8" cy="6.2" r="2.2" fill="none" stroke="#fff" stroke-width="1"/><path d="M7.5 2v4" stroke="#fff" stroke-width="1.1"/></svg>
<svg style="left:1228.5px;top:73.5px;" width="11" height="11" viewBox="0 0 11 11"><circle cx="5.5" cy="5.5" r="5" fill="#a4ac3c"/><text x="4.8" y="8" font-family="Liberation Sans,sans-serif" font-size="7" font-weight="bold" text-anchor="middle" fill="#fff">S</text><path d="M9 2v4.5" stroke="#fff" stroke-width="1.1"/></svg>
<span style="left:1215px;top:85.5px;font-size:6.38px;line-height:12px;color:#bdbdbd;">-4.1</span>
<span style="left:1235px;top:85.5px;font-size:6.38px;line-height:12px;color:#bdbdbd;">-4.3</span>
<div style="left:1221px;top:96px;width:20px;height:212px;background:#232323;"></div>
<span style="left:1228.864890625px;top:99.2px;font-size:6.6px;line-height:12px;color:#c4c4c4;">3</span>
<div style="left:1223.5px;top:105.0px;width:2px;height:1px;background:#a0a0a0;"></div>
<div style="left:1236.5px;top:105.0px;width:2px;height:1px;background:#a0a0a0;"></div>
<span style="left:1228.864890625px;top:110.1px;font-size:6.6px;line-height:12px;color:#c4c4c4;">6</span>
<div style="left:1223.5px;top:115.9px;width:2px;height:1px;background:#a0a0a0;"></div>
<div style="left:1236.5px;top:115.9px;width:2px;height:1px;background:#a0a0a0;"></div>
<span style="left:1228.864890625px;top:121.0px;font-size:6.6px;line-height:12px;color:#c4c4c4;">9</span>
<div style="left:1223.5px;top:126.8px;width:2px;height:1px;background:#a0a0a0;"></div>
<div style="left:1236.5px;top:126.8px;width:2px;height:1px;background:#a0a0a0;"></div>
<span style="left:1227.02978125px;top:131.9px;font-size:6.6px;line-height:12px;color:#c4c4c4;">12</span>
<div style="left:1223.5px;top:137.70000000000002px;width:2px;height:1px;background:#a0a0a0;"></div>
<div style="left:1236.5px;top:137.70000000000002px;width:2px;height:1px;background:#a0a0a0;"></div>
<span style="left:1227.02978125px;top:142.8px;font-size:6.6px;line-height:12px;color:#c4c4c4;">15</span>
<div style="left:1223.5px;top:148.60000000000002px;width:2px;height:1px;background:#a0a0a0;"></div>
<div style="left:1236.5px;top:148.60000000000002px;width:2px;height:1px;background:#a0a0a0;"></div>
<span style="left:1227.02978125px;top:153.7px;font-size:6.6px;line-height:12px;color:#c4c4c4;">18</span>
<div style="left:1223.5px;top:159.5px;width:2px;height:1px;background:#a0a0a0;"></div>
<div style="left:1236.5px;top:159.5px;width:2px;height:1px;background:#a0a0a0;"></div>
<span style="left:1227.02978125px;top:164.6px;font-size:6.6px;line-height:12px;color:#c4c4c4;">21</span>
<div style="left:1223.5px;top:170.40000000000003px;width:2px;height:1px;background:#a0a0a0;"></div>
<div style="left:1236.5px;top:170.40000000000003px;width:2px;height:1px;background:#a0a0a0;"></div>
<span style="left:1227.02978125px;top:175.5px;font-size:6.6px;line-height:12px;color:#c4c4c4;">24</span>
<div style="left:1223.5px;top:181.3px;width:2px;height:1px;background:#a0a0a0;"></div>
<div style="left:1236.5px;top:181.3px;width:2px;height:1px;background:#a0a0a0;"></div>
<span style="left:1227.02978125px;top:186.4px;font-size:6.6px;line-height:12px;color:#c4c4c4;">27</span>
<div style="left:1223.5px;top:192.20000000000002px;width:2px;height:1px;background:#a0a0a0;"></div>
<div style="left:1236.5px;top:192.20000000000002px;width:2px;height:1px;background:#a0a0a0;"></div>
<span style="left:1227.02978125px;top:197.3px;font-size:6.6px;line-height:12px;color:#c4c4c4;">30</span>
<div style="left:1223.5px;top:203.10000000000002px;width:2px;height:1px;background:#a0a0a0;"></div>
<div style="left:1236.5px;top:203.10000000000002px;width:2px;height:1px;background:#a0a0a0;"></div>
<span style="left:1227.02978125px;top:208.2px;font-size:6.6px;line-height:12px;color:#c4c4c4;">33</span>
<div style="left:1223.5px;top:214.0px;width:2px;height:1px;background:#a0a0a0;"></div>
<div style="left:1236.5px;top:214.0px;width:2px;height:1px;background:#a0a0a0;"></div>
<span style="left:1227.02978125px;top:219.1px;font-size:6.6px;line-height:12px;color:#c4c4c4;">36</span>
<div style="left:1223.5px;top:224.90000000000003px;width:2px;height:1px;background:#a0a0a0;"></div>
<div style="left:1236.5px;top:224.90000000000003px;width:2px;height:1px;background:#a0a0a0;"></div>
<span style="left:1227.02978125px;top:230.0px;font-size:6.6px;line-height:12px;color:#c4c4c4;">39</span>
<div style="left:1223.5px;top:235.8px;width:2px;height:1px;background:#a0a0a0;"></div>
<div style="left:1236.5px;top:235.8px;width:2px;height:1px;background:#a0a0a0;"></div>
<span style="left:1227.02978125px;top:240.9px;font-size:6.6px;line-height:12px;color:#c4c4c4;">42</span>
<div style="left:1223.5px;top:246.70000000000005px;width:2px;height:1px;background:#a0a0a0;"></div>
<div style="left:1236.5px;top:246.70000000000005px;width:2px;height:1px;background:#a0a0a0;"></div>
<span style="left:1227.02978125px;top:251.8px;font-size:6.6px;line-height:12px;color:#c4c4c4;">45</span>
<div style="left:1223.5px;top:257.6px;width:2px;height:1px;background:#a0a0a0;"></div>
<div style="left:1236.5px;top:257.6px;width:2px;height:1px;background:#a0a0a0;"></div>
<span style="left:1227.02978125px;top:262.7px;font-size:6.6px;line-height:12px;color:#c4c4c4;">48</span>
<div style="left:1223.5px;top:268.5px;width:2px;height:1px;background:#a0a0a0;"></div>
<div style="left:1236.5px;top:268.5px;width:2px;height:1px;background:#a0a0a0;"></div>
<span style="left:1227.02978125px;top:273.6px;font-size:6.6px;line-height:12px;color:#c4c4c4;">51</span>
<div style="left:1223.5px;top:279.40000000000003px;width:2px;height:1px;background:#a0a0a0;"></div>
<div style="left:1236.5px;top:279.40000000000003px;width:2px;height:1px;background:#a0a0a0;"></div>
<span style="left:1227.02978125px;top:284.5px;font-size:6.6px;line-height:12px;color:#c4c4c4;">54</span>
<div style="left:1223.5px;top:290.3px;width:2px;height:1px;background:#a0a0a0;"></div>
<div style="left:1236.5px;top:290.3px;width:2px;height:1px;background:#a0a0a0;"></div>
<span style="left:1227.02978125px;top:295.4px;font-size:6.6px;line-height:12px;color:#c4c4c4;">57</span>
<div style="left:1223.5px;top:301.20000000000005px;width:2px;height:1px;background:#a0a0a0;"></div>
<div style="left:1236.5px;top:301.20000000000005px;width:2px;height:1px;background:#a0a0a0;"></div>
<div style="left:1199.7px;top:104px;width:1px;height:196px;background:#4a4a4a;"></div>
<svg style="left:1192px;top:167px;" width="16" height="7.5" viewBox="0 0 16 7.5"><rect x="0.4" y="0.4" width="7" height="6.7" fill="#f2f2f2"/><rect x="8.4" y="0.4" width="7" height="6.7" fill="#f2f2f2"/><path d="M1.8 3.75h4.2M9.8 3.75h4.2" stroke="#333" stroke-width="1.1"/></svg>
<svg style="left:1197.5px;top:310.5px;" width="6" height="7" viewBox="0 0 6 7"><rect x="0.5" y="3" width="5" height="3.8" fill="#f2f2f2"/><path d="M1.6 3v-1a1.4 1.4 0 0 1 2.8 0v1" fill="none" stroke="#f2f2f2" stroke-width="0.9"/></svg>
<span style="left:1216px;top:310.0px;font-size:6.47px;line-height:12px;color:#c4c4c4;">0.0</span>
<span style="left:1236px;top:310.0px;font-size:6.47px;line-height:12px;color:#c4c4c4;">0.0</span>
<div style="left:0px;top:322.5px;width:1280px;height:13px;background:#2b2b2b;"></div>
<span style="left:6px;top:323.0px;font-size:7.2px;line-height:12px;color:#c8c8c8;">Project Media</span>
<span style="left:83.5px;top:323.0px;font-size:7.25px;line-height:12px;color:#c8c8c8;">Explorer</span>
<span style="left:144.5px;top:323.0px;font-size:7.31px;line-height:12px;color:#d0d0d0;">Transitions</span>
<svg style="left:184.5px;top:325.5px;" width="7" height="7" viewBox="0 0 7 7"><rect x="0.6" y="0.6" width="5.8" height="5.8" fill="none" stroke="#f2f2f2" stroke-width="1"/></svg>
<svg style="left:196.5px;top:325.5px;" width="7" height="7" viewBox="0 0 7 7"><path d="M0.8 0.8l5.4 5.4M6.2 0.8l-5.4 5.4" stroke="#f2f2f2" stroke-width="1.4"/></svg>
<div style="left:210px;top:323px;width:32px;height:12.5px;background:#404040;"></div>
<span style="left:213.5px;top:323.0px;font-size:6.84px;line-height:12px;color:#d0d0d0;">Video FX</span>
<div style="left:804px;top:323px;width:107px;height:12px;background:#404040;"></div>
<span style="left:805px;top:323.0px;font-size:6.45px;line-height:12px;color:#d0d0d0;">eview</span>
<svg style="left:826px;top:325.5px;" width="7" height="7" viewBox="0 0 7 7"><rect x="0.6" y="0.6" width="5.8" height="5.8" fill="none" stroke="#f2f2f2" stroke-width="1"/></svg>
<svg style="left:838px;top:325.5px;" width="7" height="7" viewBox="0 0 7 7"><path d="M0.8 0.8l5.4 5.4M6.2 0.8l-5.4 5.4" stroke="#f2f2f2" stroke-width="1.4"/></svg>
<span style="left:855px;top:323.0px;font-size:6.92px;line-height:12px;color:#d0d0d0;">Trimmer</span>
<svg style="left:885px;top:325.5px;" width="7" height="7" viewBox="0 0 7 7"><rect x="0.6" y="0.6" width="5.8" height="5.8" fill="none" stroke="#f2f2f2" stroke-width="1"/></svg>
<svg style="left:897.5px;top:325.5px;" width="7" height="7" viewBox="0 0 7 7"><path d="M0.8 0.8l5.4 5.4M6.2 0.8l-5.4 5.4" stroke="#f2f2f2" stroke-width="1.4"/></svg>
<div style="left:1186px;top:323.5px;width:69px;height:11.5px;background:#404040;"></div>
<span style="left:1190.5px;top:323.0px;font-size:7.12px;line-height:12px;color:#d0d0d0;">Master Bus</span>
<svg style="left:1231px;top:325.5px;" width="7" height="7" viewBox="0 0 7 7"><rect x="0.6" y="0.6" width="5.8" height="5.8" fill="none" stroke="#f2f2f2" stroke-width="1"/></svg>
<svg style="left:1243.5px;top:325.5px;" width="7" height="7" viewBox="0 0 7 7"><path d="M0.8 0.8l5.4 5.4M6.2 0.8l-5.4 5.4" stroke="#f2f2f2" stroke-width="1.4"/></svg>
<div style="left:0px;top:335.5px;width:1280px;height:295px;background:#222222;"></div>
<div style="left:0px;top:335.5px;width:1280px;height:2px;background:#1c1c1c;"></div>
<div style="left:18px;top:337.5px;width:1252px;height:35px;background:#2e2e2e;"></div>
<div style="left:1px;top:340px;width:16.5px;height:32.5px;background:#3a3a3a;"></div>
<div style="left:18px;top:372.5px;width:1252px;height:87.5px;background:#2d2d2d;"></div>
<div style="left:19.5px;top:337.5px;width:1px;height:293px;background:#343434;"></div>
<div style="left:20px;top:342.3px;width:59px;height:1.2px;background:#6ea9d8;"></div>
<div style="left:78.5px;top:340.5px;width:1px;height:5px;background:#9ac4e4;"></div>
<div style="left:81.5px;top:340.8px;width:21px;height:7px;background:#f4f4f4;"></div>
<span style="left:83.5px;top:338.5px;font-size:6.72px;line-height:12px;color:#333;">+5:22</span>
<div style="left:24px;top:354.8px;width:78px;height:5.4px;background:#1f1f1f;"></div>
<svg style="left:20.5px;top:355.5px;" width="5" height="5" viewBox="0 0 5 5"><path d="M0 0h5l-5 4.5z" fill="#e6e83c"/></svg>
<svg style="left:100px;top:355.5px;" width="5" height="5" viewBox="0 0 5 5"><path d="M0 0h5v4.5z" fill="#e6e83c"/></svg>
<div style="left:18px;top:360px;width:1252px;height:101px;overflow:hidden">
<div style="left:2.6px;top:2.5px;width:0;height:98px;border-left:1px dotted #3c3c3c"></div>
<div style="left:2.6px;top:2.5px;width:1px;height:9.5px;background:#6e6e6e"></div>
<span style="left:5.0px;top:1.4px;font-size:6.17px;line-height:10px;color:#8c8c8c">00:00:00;00</span>
<div style="left:12.9px;top:11px;width:1px;height:1.2px;background:#9a9a9a"></div>
<div style="left:23.2px;top:11px;width:1px;height:1.2px;background:#9a9a9a"></div>
<div style="left:33.5px;top:11px;width:1px;height:1.2px;background:#9a9a9a"></div>
<div style="left:43.7px;top:11px;width:1px;height:1.2px;background:#9a9a9a"></div>
<div style="left:54.0px;top:11px;width:1px;height:1.2px;background:#9a9a9a"></div>
<div style="left:64.3px;top:11px;width:1px;height:1.2px;background:#9a9a9a"></div>
<div style="left:74.6px;top:11px;width:1px;height:1.2px;background:#9a9a9a"></div>
<div style="left:84.9px;top:11px;width:1px;height:1.2px;background:#9a9a9a"></div>
<div style="left:95.2px;top:11px;width:1px;height:1.2px;background:#9a9a9a"></div>
<div style="left:105.4px;top:2.5px;width:0;height:98px;border-left:1px dotted #3c3c3c"></div>
<div style="left:105.4px;top:2.5px;width:1px;height:9.5px;background:#6e6e6e"></div>
<span style="left:107.8px;top:1.4px;font-size:6.17px;line-height:10px;color:#8c8c8c">00:00:10;00</span>
<div style="left:115.7px;top:11px;width:1px;height:1.2px;background:#9a9a9a"></div>
<div style="left:126.0px;top:11px;width:1px;height:1.2px;background:#9a9a9a"></div>
<div style="left:136.3px;top:11px;width:1px;height:1.2px;background:#9a9a9a"></div>
<div style="left:146.6px;top:11px;width:1px;height:1.2px;background:#9a9a9a"></div>
<div style="left:156.9px;top:11px;width:1px;height:1.2px;background:#9a9a9a"></div>
<div style="left:167.2px;top:11px;width:1px;height:1.2px;background:#9a9a9a"></div>
<div style="left:177.4px;top:11px;width:1px;height:1.2px;background:#9a9a9a"></div>
<div style="left:187.7px;top:11px;width:1px;height:1.2px;background:#9a9a9a"></div>
<div style="left:198.0px;top:11px;width:1px;height:1.2px;background:#9a9a9a"></div>
<div style="left:208.3px;top:2.5px;width:0;height:98px;border-left:1px dotted #3c3c3c"></div>
<div style="left:208.3px;top:2.5px;width:1px;height:9.5px;background:#6e6e6e"></div>
<span style="left:210.7px;top:1.4px;font-size:6.17px;line-height:10px;color:#8c8c8c">00:00:20;00</span>
<div style="left:218.6px;top:11px;width:1px;height:1.2px;background:#9a9a9a"></div>
<div style="left:228.9px;top:11px;width:1px;height:1.2px;background:#9a9a9a"></div>
<div style="left:239.2px;top:11px;width:1px;height:1.2px;background:#9a9a9a"></div>
<div style="left:249.4px;top:11px;width:1px;height:1.2px;background:#9a9a9a"></div>
<div style="left:259.7px;top:11px;width:1px;height:1.2px;background:#9a9a9a"></div>
<div style="left:270.0px;top:11px;width:1px;height:1.2px;background:#9a9a9a"></div>
<div style="left:280.3px;top:11px;width:1px;height:1.2px;background:#9a9a9a"></div>
<div style="left:290.6px;top:11px;width:1px;height:1.2px;background:#9a9a9a"></div>
<div style="left:300.9px;top:11px;width:1px;height:1.2px;background:#9a9a9a"></div>
<div style="left:825.4px;top:2.5px;width:0;height:98px;border-left:1px dotted #3c3c3c"></div>
<div style="left:825.4px;top:2.5px;width:1px;height:9.5px;background:#6e6e6e"></div>
<span style="left:827.8px;top:1.4px;font-size:6.17px;line-height:10px;color:#8c8c8c">00:01:20;00</span>
<div style="left:835.7px;top:11px;width:1px;height:1.2px;background:#9a9a9a"></div>
<div style="left:846.0px;top:11px;width:1px;height:1.2px;background:#9a9a9a"></div>
<div style="left:856.3px;top:11px;width:1px;height:1.2px;background:#9a9a9a"></div>
<div style="left:866.5px;top:11px;width:1px;height:1.2px;background:#9a9a9a"></div>
<div style="left:876.8px;top:11px;width:1px;height:1.2px;background:#9a9a9a"></div>
<div style="left:887.1px;top:11px;width:1px;height:1.2px;background:#9a9a9a"></div>
<div style="left:897.4px;top:11px;width:1px;height:1.2px;background:#9a9a9a"></div>
<div style="left:907.7px;top:11px;width:1px;height:1.2px;background:#9a9a9a"></div>
<div style="left:918.0px;top:11px;width:1px;height:1.2px;background:#9a9a9a"></div>
<div style="left:928.2px;top:2.5px;width:0;height:98px;border-left:1px dotted #3c3c3c"></div>
<div style="left:928.2px;top:2.5px;width:1px;height:9.5px;background:#6e6e6e"></div>
<span style="left:930.6px;top:1.4px;font-size:6.17px;line-height:10px;color:#8c8c8c">00:01:29;29</span>
<div style="left:938.5px;top:11px;width:1px;height:1.2px;background:#9a9a9a"></div>
<div style="left:948.8px;top:11px;width:1px;height:1.2px;background:#9a9a9a"></div>
<div style="left:959.1px;top:11px;width:1px;height:1.2px;background:#9a9a9a"></div>
<div style="left:969.4px;top:11px;width:1px;height:1.2px;background:#9a9a9a"></div>
<div style="left:979.7px;top:11px;width:1px;height:1.2px;background:#9a9a9a"></div>
<div style="left:990.0px;top:11px;width:1px;height:1.2px;background:#9a9a9a"></div>
<div style="left:1000.2px;top:11px;width:1px;height:1.2px;background:#9a9a9a"></div>
<div style="left:1010.5px;top:11px;width:1px;height:1.2px;background:#9a9a9a"></div>
<div style="left:1020.8px;top:11px;width:1px;height:1.2px;background:#9a9a9a"></div>
<div style="left:1031.1px;top:2.5px;width:0;height:98px;border-left:1px dotted #3c3c3c"></div>
<div style="left:1031.1px;top:2.5px;width:1px;height:9.5px;background:#6e6e6e"></div>
<span style="left:1033.5px;top:1.4px;font-size:6.17px;line-height:10px;color:#8c8c8c">00:01:39;29</span>
<div style="left:1041.4px;top:11px;width:1px;height:1.2px;background:#9a9a9a"></div>
<div style="left:1051.7px;top:11px;width:1px;height:1.2px;background:#9a9a9a"></div>
<div style="left:1062.0px;top:11px;width:1px;height:1.2px;background:#9a9a9a"></div>
<div style="left:1072.2px;top:11px;width:1px;height:1.2px;background:#9a9a9a"></div>
<div style="left:1082.5px;top:11px;width:1px;height:1.2px;background:#9a9a9a"></div>
<div style="left:1092.8px;top:11px;width:1px;height:1.2px;background:#9a9a9a"></div>
<div style="left:1103.1px;top:11px;width:1px;height:1.2px;background:#9a9a9a"></div>
<div style="left:1113.4px;top:11px;width:1px;height:1.2px;background:#9a9a9a"></div>
<div style="left:1123.7px;top:11px;width:1px;height:1.2px;background:#9a9a9a"></div>
<div style="left:1133.9px;top:2.5px;width:0;height:98px;border-left:1px dotted #3c3c3c"></div>
<div style="left:1133.9px;top:2.5px;width:1px;height:9.5px;background:#6e6e6e"></div>
<span style="left:1136.3px;top:1.4px;font-size:6.17px;line-height:10px;color:#8c8c8c">00:01:49;29</span>
<div style="left:1144.2px;top:11px;width:1px;height:1.2px;background:#9a9a9a"></div>
<div style="left:1154.5px;top:11px;width:1px;height:1.2px;background:#9a9a9a"></div>
<div style="left:1164.8px;top:11px;width:1px;height:1.2px;background:#9a9a9a"></div>
<div style="left:1175.1px;top:11px;width:1px;height:1.2px;background:#9a9a9a"></div>
<div style="left:1185.4px;top:11px;width:1px;height:1.2px;background:#9a9a9a"></div>
<div style="left:1195.7px;top:11px;width:1px;height:1.2px;background:#9a9a9a"></div>
<div style="left:1205.9px;top:11px;width:1px;height:1.2px;background:#9a9a9a"></div>
<div style="left:1216.2px;top:11px;width:1px;height:1.2px;background:#9a9a9a"></div>
<div style="left:1226.5px;top:11px;width:1px;height:1.2px;background:#9a9a9a"></div>
<div style="left:1236.8px;top:2.5px;width:0;height:98px;border-left:1px dotted #3c3c3c"></div>
<div style="left:1236.8px;top:2.5px;width:1px;height:9.5px;background:#6e6e6e"></div>
<span style="left:1239.2px;top:1.4px;font-size:6.17px;line-height:10px;color:#8c8c8c">00:01:59;29</span>
<div style="left:1247.1px;top:11px;width:1px;height:1.2px;background:#9a9a9a"></div>
<div style="left:1257.4px;top:11px;width:1px;height:1.2px;background:#9a9a9a"></div>
<div style="left:1267.7px;top:11px;width:1px;height:1.2px;background:#9a9a9a"></div>
<div style="left:1277.9px;top:11px;width:1px;height:1.2px;background:#9a9a9a"></div>
<div style="left:1288.2px;top:11px;width:1px;height:1.2px;background:#9a9a9a"></div>
<div style="left:1298.5px;top:11px;width:1px;height:1.2px;background:#9a9a9a"></div>
<div style="left:1308.8px;top:11px;width:1px;height:1.2px;background:#9a9a9a"></div>
<div style="left:1319.1px;top:11px;width:1px;height:1.2px;background:#9a9a9a"></div>
<div style="left:1329.4px;top:11px;width:1px;height:1.2px;background:#9a9a9a"></div>
</div>
<div style="left:19.6px;top:362px;width:3px;height:8.5px;background:#f4f4f4;border-radius:0 0 1.5px 1.5px;"></div>
<div style="left:0px;top:373px;width:17px;height:41.3px;background:#4a70b6;"></div>
<div style="left:0px;top:414.7px;width:17px;height:45.5px;background:#9a2839;"></div>
<svg style="left:4px;top:376px;" width="9" height="8" viewBox="0 0 9 8"><path d="M0.5 1h8M0.5 4h8M0.5 7h8" stroke="#f2f2f2" stroke-width="1.2"/></svg>
<svg style="left:4px;top:418.5px;" width="9" height="8" viewBox="0 0 9 8"><path d="M0.5 1h8M0.5 4h8M0.5 7h8" stroke="#f2f2f2" stroke-width="1.2"/></svg>
<span style="left:4.3px;top:384.5px;font-size:8px;line-height:12px;color:#f2f2f2;">1</span>
<svg style="left:9.5px;top:392.5px;" width="5.5" height="5.5" viewBox="0 0 5.5 5.5"><rect x="0.3" y="0.3" width="4.9" height="4.9" fill="#f2f2f2"/><path d="M1.3 1.3l2.9 2.9M4.2 1.3L1.3 4.2" stroke="#4a70b6" stroke-width="0.8"/></svg>
<span style="left:3.6px;top:429.0px;font-size:8.5px;line-height:12px;color:#f2f2f2;">2</span>
<svg style="left:9.5px;top:437px;" width="5.5" height="6" viewBox="0 0 5.5 6"><path d="M0 2h1.6l2.6-2v6l-2.6-2h-1.6z" fill="#f2f2f2"/></svg>
<div style="left:20.6px;top:372px;width:59.4px;height:41.8px;background:#4a70b6;border:1.2px solid #c6d63c;box-sizing:border-box;"></div>
<div style="left:21.8px;top:386.6px;width:32.7px;height:26px;background:linear-gradient(135deg,#5a62b0,#64559c);"></div>
<div style="left:54.5px;top:386.6px;width:24.3px;height:26px;background:#e2e1ee;"></div>
<svg style="left:42.3px;top:375px;" width="9" height="10" viewBox="0 0 9 10"><path d="M2.3 0v7h6.7M0 2.3h6.7v7" fill="none" stroke="#f2f2f2" stroke-width="1.3"/></svg>
<div style="left:46px;top:385.6px;width:6px;height:1.4px;background:#3cc0b8;"></div>
<svg style="left:54.5px;top:376.5px;" width="8" height="9" viewBox="0 0 8 9"><text x="0" y="7.5" font-family="Liberation Serif,serif" font-style="italic" font-size="8.5" fill="#f2f2f2">f</text><rect x="3.4" y="4.8" width="3.2" height="3.2" fill="none" stroke="#cfe0ff" stroke-width="0.9"/></svg>
<svg style="left:68px;top:376px;" width="9" height="8" viewBox="0 0 9 8"><path d="M0.5 1h8M0.5 4h8M0.5 7h8" stroke="#f2f2f2" stroke-width="1.2"/></svg>
<svg style="left:76px;top:385px;" width="4" height="4" viewBox="0 0 4 4"><path d="M0.5 0.5L3.5 3.5" stroke="#3cc0a0" stroke-width="1.4"/></svg>
<div style="left:20.6px;top:415.4px;width:59.4px;height:44.2px;background:#e9e5dd;border:1.2px solid #c6d63c;box-sizing:border-box;"></div>
<div style="left:21.8px;top:416.6px;width:57px;height:13.2px;background:#9a2839;"></div>
<span style="left:23px;top:416.5px;font-size:7.15px;line-height:12px;color:#f3c6c6;">Klasky ...</span>
<svg style="left:54.5px;top:418.5px;" width="8" height="9" viewBox="0 0 8 9"><text x="0" y="7.5" font-family="Liberation Serif,serif" font-style="italic" font-size="8.5" fill="#f2f2f2">f</text><rect x="3.4" y="4.8" width="3.2" height="3.2" fill="none" stroke="#ffd8d8" stroke-width="0.9"/></svg>
<svg style="left:68px;top:418.5px;" width="9" height="8" viewBox="0 0 9 8"><path d="M0.5 1h8M0.5 4h8M0.5 7h8" stroke="#f2f2f2" stroke-width="1.2"/></svg>
<div style="left:21.8px;top:444px;width:57px;height:0.8px;background:#cfc8c0;"></div>
<svg style="left:0;top:0" width="90" height="470"><path d="M22.5 435.6V438.0M23.5 435.0V438.6M24.5 436.2V437.4M25.5 435.8V437.8M26.5 434.4V439.2M27.5 434.4V439.2M28.5 435.6V438.0M29.5 436.2V437.4M30.5 436.2V437.4M31.5 436.2V437.4M32.5 434.4V439.2M33.5 434.2V439.4M34.5 435.0V438.6M35.5 434.6V439.0M36.5 434.6V439.0M37.5 436.2V437.4M38.5 435.6V438.0M39.5 434.2V439.4M40.5 434.2V439.4M41.5 435.0V438.6M42.5 435.0V438.6M43.5 434.6V439.0M44.5 435.6V438.0M45.5 434.6V439.0M46.5 436.2V437.4M47.5 435.0V438.6M48.5 435.6V438.0M49.5 436.2V437.4M50.5 434.6V439.0M51.5 435.8V437.8M52.5 434.6V439.0M53.5 435.0V438.6M54.5 434.6V439.0M55.5 436.5V437.1M56.5 436.5V437.1M57.5 436.3V437.3M58.5 436.0V437.6M59.5 436.0V437.6M60.5 436.4V437.2M61.5 435.8V437.8M62.5 436.5V437.1M63.5 436.5V437.1M64.5 435.8V437.8M65.5 436.0V437.6M66.5 436.5V437.1M67.5 435.8V437.8M68.5 436.5V437.1M69.5 436.0V437.6M70.5 436.4V437.2M71.5 435.7V437.9M72.5 435.6V438.0M73.5 436.3V437.3M74.5 435.2l2.5 1.6-2.5 1.6zM22.5 450.5V452.9M23.5 450.5V452.9M24.5 449.3V454.1M25.5 449.9V453.5M26.5 451.1V452.3M27.5 449.5V453.9M28.5 449.5V453.9M29.5 449.1V454.3M30.5 449.5V453.9M31.5 449.9V453.5M32.5 451.1V452.3M33.5 449.9V453.5M34.5 449.1V454.3M35.5 450.7V452.7M36.5 449.9V453.5M37.5 449.5V453.9M38.5 449.5V453.9M39.5 449.1V454.3M40.5 450.5V452.9M41.5 449.3V454.1M42.5 449.3V454.1M43.5 449.1V454.3M44.5 449.9V453.5M45.5 449.3V454.1M46.5 449.3V454.1M47.5 450.5V452.9M48.5 450.5V452.9M49.5 449.9V453.5M50.5 449.9V453.5M51.5 449.5V453.9M52.5 449.5V453.9M53.5 451.1V452.3M54.5 451.1V452.3M55.5 451.4V452.0M56.5 451.4V452.0M57.5 451.2V452.1M58.5 450.9V452.5M59.5 450.5V452.9M60.5 450.5V452.9M61.5 451.2V452.1M62.5 451.4V452.0M63.5 451.4V452.0M64.5 450.9V452.5M65.5 451.2V452.2M66.5 451.2V452.1M67.5 451.2V452.2M68.5 451.4V452.0M69.5 450.6V452.8M70.5 451.2V452.2M71.5 451.2V452.1M72.5 451.2V452.1M73.5 450.6V452.8M74.5 450.09999999999997l2.5 1.6-2.5 1.6z" stroke="#a22a44" stroke-width="1" fill="#a22a44"/></svg>
<svg style="left:47px;top:428.8px;" width="8" height="3" viewBox="0 0 8 3"><path d="M0 0.5h8l-1.5 2h-5z" fill="#2a2ab0"/></svg>
<svg style="left:76px;top:428.5px;" width="4" height="3.5" viewBox="0 0 4 3.5"><path d="M0 0h4v3z" fill="#2a2ab0"/></svg>
<svg style="left:20.8px;top:428.8px;" width="3" height="3" viewBox="0 0 3 3"><path d="M0 0h3l-3 2.5z" fill="#2a2ab0"/></svg>
<svg style="left:21px;top:409.5px;" width="4" height="4" viewBox="0 0 4 4"><path d="M0 4V0.5L3.5 4z" fill="#f4f4f4"/></svg>
<svg style="left:21px;top:455.5px;" width="4" height="4" viewBox="0 0 4 4"><path d="M0 4V0.5L3.5 4z" fill="#f4f4f4"/></svg>
<div style="left:1270.5px;top:337.5px;width:9.5px;height:293px;background:#2a2a2a;"></div>
<div style="left:1271.5px;top:343px;width:8.5px;height:9px;background:#c8c8c8;"></div>
<span style="left:1273px;top:341.7px;font-size:7.5px;line-height:12px;color:#222;font-weight:bold;">P</span>
<svg style="left:1272.5px;top:354px;" width="7" height="5" viewBox="0 0 7 5"><path d="M0.5 4.5l3-3.5 3 3.5z" fill="#f2f2f2"/></svg>
<div style="left:1270.5px;top:362px;width:9.5px;height:228px;background:#2d2d2d;"></div>
<div style="left:1270.5px;top:590px;width:9.5px;height:40.5px;background:#4a4a4a;"></div>
<svg style="left:1271.5px;top:595px;" width="6" height="4" viewBox="0 0 6 4"><path d="M0.3 0.5h5.4l-2.7 3z" fill="#f2f2f2"/></svg>
<svg style="left:1271px;top:606px;" width="6" height="6" viewBox="0 0 6 6"><path d="M3 0.5v5M0.5 3h5" stroke="#f2f2f2" stroke-width="1.3"/></svg>
<svg style="left:1271px;top:621px;" width="6" height="4" viewBox="0 0 6 4"><path d="M0.5 2h5" stroke="#bbb" stroke-width="1.2"/></svg>
<div style="left:1266px;top:475px;width:14px;height:1px;background:#6a6a6a;"></div>
<div style="left:1266px;top:478px;width:14px;height:1px;background:#6a6a6a;"></div>
<div style="left:0px;top:630.5px;width:1280px;height:12px;background:#2d2d2d;"></div>
<div style="left:36px;top:631px;width:1192px;height:11.3px;background:#4c4c4c;"></div>
<svg style="left:23.5px;top:633.5px;" width="5" height="7" viewBox="0 0 5 7"><path d="M4.5 0.5v6l-4-3z" fill="#f2f2f2"/></svg>
<div style="left:1227.5px;top:631px;width:4px;height:11.3px;background:#3a3a3a;"></div>
<div style="left:1231.5px;top:631px;width:13px;height:11.3px;background:#262626;"></div>
<svg style="left:1236px;top:633.5px;" width="5" height="7" viewBox="0 0 5 7"><path d="M0.5 0.5v6l4-3z" fill="#f2f2f2"/></svg>
<div style="left:1244.5px;top:631px;width:35.5px;height:11.3px;background:#3c3c3c;"></div>
<svg style="left:1246.5px;top:633.5px;" width="7" height="7" viewBox="0 0 7 7"><path d="M3.5 0.8v5.4M0.8 3.5h5.4" stroke="#f2f2f2" stroke-width="1.3"/></svg>
<svg style="left:1262px;top:633.5px;" width="7" height="7" viewBox="0 0 7 7"><path d="M1 3.5h5" stroke="#cfcfcf" stroke-width="1.2"/></svg>
<svg style="left:1273px;top:633px;" width="7" height="8" viewBox="0 0 7 8"><circle cx="4" cy="3.4" r="2.5" fill="none" stroke="#f2f2f2" stroke-width="1"/><path d="M2.2 5.4L0.5 7.5" stroke="#f2f2f2" stroke-width="1.1"/></svg>
<div style="left:0px;top:642.5px;width:1280px;height:23px;background:#2b2b2b;"></div>
<div style="left:20px;top:643px;width:1260px;height:21.5px;background:#393939;"></div>
<div style="left:0px;top:664.5px;width:1280px;height:1.5px;background:#262626;"></div>
<div style="left:0px;top:666px;width:1280px;height:12.5px;background:#303030;"></div>
<svg style="left:26.5px;top:647px;" width="7" height="13" viewBox="0 0 7 13"><rect x="1.8" y="0.5" width="3.4" height="7" rx="1.7" fill="#d8929c"/><path d="M0.6 5.5a2.9 2.9 0 0 0 5.8 0M3.5 8.6v3M1.8 11.8h3.4" fill="none" stroke="#c07884" stroke-width="0.9"/></svg>
<svg style="left:41.5px;top:649px;" width="11" height="10" viewBox="0 0 11 10"><path d="M2 6.2a3.6 3.6 0 1 0 1-3.6" fill="none" stroke="#f2f2f2" stroke-width="1.4"/><path d="M0.5 1.2l3.8 0.3-1.6 3.2z" fill="#f2f2f2"/><path d="M8.8 9.6l-1.8-2.8 3.2-0.2z" fill="#f2f2f2"/></svg>
<svg style="left:59.5px;top:649.5px;" width="9" height="9" viewBox="0 0 9 9"><rect x="0.5" y="0.5" width="1.5" height="8" fill="#f2f2f2"/><path d="M3.3 0.5l5.2 4-5.2 4z" fill="none" stroke="#f2f2f2" stroke-width="1.1"/></svg>
<svg style="left:78px;top:649px;" width="9" height="10" viewBox="0 0 9 10"><path d="M0.8 0.5l7.4 4.5-7.4 4.5z" fill="#f2f2f2"/></svg>
<svg style="left:94.5px;top:649.5px;" width="9" height="9" viewBox="0 0 9 9"><rect x="0.5" y="0" width="2.8" height="9" fill="#f2f2f2"/><rect x="5.7" y="0" width="2.8" height="9" fill="#f2f2f2"/></svg>
<svg style="left:112px;top:649.5px;" width="9" height="9" viewBox="0 0 9 9"><rect x="0" y="0" width="8.8" height="8.8" fill="#f2f2f2"/></svg>
<svg style="left:130px;top:650px;" width="9" height="8" viewBox="0 0 9 8"><rect x="0.3" y="0.2" width="1.6" height="7.6" fill="#f2f2f2"/><path d="M8.2 0.2v7.6l-5.6-3.8z" fill="#f2f2f2"/></svg>
<svg style="left:147.5px;top:650px;" width="9" height="8" viewBox="0 0 9 8"><rect x="7.1" y="0.2" width="1.6" height="7.6" fill="#f2f2f2"/><path d="M0.8 0.2v7.6l5.6-3.8z" fill="#f2f2f2"/></svg>
<svg style="left:164px;top:650px;" width="11" height="8" viewBox="0 0 11 8"><path d="M5.2 0.2v7.6l-5-3.8z" fill="#f2f2f2"/><rect x="6.2" y="0.2" width="1.4" height="7.6" fill="#f2f2f2"/><rect x="8.6" y="0.2" width="1.4" height="7.6" fill="#f2f2f2"/></svg>
<svg style="left:181px;top:650px;" width="11" height="8" viewBox="0 0 11 8"><path d="M5.8 0.2v7.6l5-3.8z" fill="#f2f2f2"/><rect x="1" y="0.2" width="1.4" height="7.6" fill="#f2f2f2"/><rect x="3.4" y="0.2" width="1.4" height="7.6" fill="#f2f2f2"/></svg>
<div style="left:201px;top:646px;width:16.5px;height:16.5px;background:#1e9bea;"></div>
<svg style="left:204px;top:648.5px;" width="11" height="11" viewBox="0 0 11 11"><path d="M0.8 1.2l4 5-1.6 0.2 1 2.4-1 0.4-1-2.4-1.4 1z" fill="#f2f2f2"/><path d="M8 0.8v9.4" stroke="#f2f2f2" stroke-width="1"/><circle cx="8" cy="4" r="1.6" fill="#f2f2f2"/></svg>
<svg style="left:221px;top:652.5px;" width="5" height="4" viewBox="0 0 5 4"><path d="M0.3 0.5h4.4l-2.2 2.8z" fill="#f2f2f2"/></svg>
<svg style="left:232px;top:649px;" width="10" height="10" viewBox="0 0 10 10"><path d="M0.8 0.8l3.5 4.4-1.5 0.2 0.8 2-0.9 0.4-0.8-2-1.1 0.8z" fill="#f2f2f2"/><circle cx="7" cy="2" r="1.4" fill="#f2f2f2"/><circle cx="8.4" cy="6" r="1.4" fill="#f2f2f2"/><circle cx="5.5" cy="8.6" r="1.3" fill="#f2f2f2"/></svg>
<svg style="left:248.5px;top:648.5px;" width="11" height="11" viewBox="0 0 11 11"><rect x="0.6" y="0.6" width="6" height="7.5" fill="none" stroke="#cfcfcf" stroke-width="0.9"/><path d="M5 3l4.5 4.8-1.8 0.1 1 2.2-1 0.4-0.9-2.2-1.2 1z" fill="#f2f2f2"/></svg>
<svg style="left:266px;top:648.5px;" width="11" height="11" viewBox="0 0 11 11"><rect x="0.6" y="0.6" width="7.5" height="6" fill="none" stroke="#bdbdbd" stroke-width="0.9"/><circle cx="6.5" cy="6" r="2.2" fill="none" stroke="#cfcfcf" stroke-width="0.9"/><path d="M8.2 7.8l2.2 2.4" stroke="#cfcfcf" stroke-width="1.1"/></svg>
<svg style="left:289.5px;top:650px;" width="9" height="9" viewBox="0 0 9 9"><path d="M0.8 0.8l7.4 7.4M8.2 0.8l-7.4 7.4" stroke="#c8c8c8" stroke-width="1.1"/></svg>
<svg style="left:309px;top:650px;" width="5" height="9" viewBox="0 0 5 9"><path d="M1.5 0.5v8M3 2.5v4" stroke="#4a4a4a" stroke-width="1"/></svg>
<svg style="left:330px;top:650px;" width="5" height="9" viewBox="0 0 5 9"><path d="M1.5 0.5v8M3 2.5v4" stroke="#4a4a4a" stroke-width="1"/></svg>
<svg style="left:342px;top:650px;" width="5" height="9" viewBox="0 0 5 9"><path d="M1.5 0.5v8M3 2.5v4" stroke="#4a4a4a" stroke-width="1"/></svg>
<svg style="left:359px;top:650px;" width="5" height="9" viewBox="0 0 5 9"><path d="M1.5 0.5v8M3 2.5v4" stroke="#4a4a4a" stroke-width="1"/></svg>
<svg style="left:369px;top:650px;" width="5" height="9" viewBox="0 0 5 9"><path d="M1.5 0.5v8M3 2.5v4" stroke="#4a4a4a" stroke-width="1"/></svg>
<div style="left:381.5px;top:646px;width:1px;height:16px;background:#444;"></div>
<svg style="left:394.5px;top:648.5px;" width="8" height="11" viewBox="0 0 8 11"><rect x="0.5" y="4.6" width="7" height="6" rx="0.6" fill="#f2f2f2"/><path d="M2 4.6v-1.6a2 2 0 0 1 4 0v1.6" fill="none" stroke="#f2f2f2" stroke-width="1.2"/><rect x="3.4" y="6.6" width="1.2" height="2.2" fill="#393939"/></svg>
<svg style="left:417px;top:649px;" width="9" height="10" viewBox="0 0 9 10"><path d="M0.5 0.5h8v5.5h-4.5l-2.6 2.6v-2.6h-0.9z" fill="#c9b857"/></svg>
<svg style="left:433.5px;top:649.5px;" width="10" height="9" viewBox="0 0 10 9"><path d="M0.5 0.5h3.4v5h-1.6l-1.8 2z" fill="#58a56c"/><path d="M9.5 0.5h-3.4v5h1.6l1.8 2z" fill="#58a56c"/><path d="M4.4 1.5h1.2" stroke="#8fd0a0" stroke-width="1"/></svg>
<div style="left:454px;top:646px;width:15px;height:16px;background:#1e90e2;"></div>
<svg style="left:456.5px;top:648.5px;" width="10" height="11" viewBox="0 0 10 11"><path d="M1.4 9.8v-5a3.6 3.6 0 0 1 7.2 0v5h-2.2v-5a1.4 1.4 0 0 0-2.8 0v5z" fill="#d0425a"/><path d="M1.4 8.2h2.2M6.4 8.2h2.2" stroke="#f0c0c8" stroke-width="1.2"/></svg>
<div style="left:471px;top:646px;width:16px;height:16px;background:#1e90e2;"></div>
<svg style="left:473.5px;top:648.5px;" width="11" height="11" viewBox="0 0 11 11"><path d="M1 1v9h9z" fill="none" stroke="#0c4f8c" stroke-width="1"/><path d="M1 1l9 9" stroke="#b0dcff" stroke-width="0.8"/></svg>
<svg style="left:491.5px;top:649px;" width="12" height="10" viewBox="0 0 12 10"><rect x="3.5" y="0.8" width="7.5" height="3" fill="#f2f2f2"/><rect x="3.5" y="5.8" width="5" height="3" fill="#f2f2f2"/><path d="M0 5l3-2.4v4.8z" fill="#f2f2f2"/><path d="M2.4 0v10" stroke="#f2f2f2" stroke-width="0.8"/></svg>
<svg style="left:507px;top:652.5px;" width="5" height="4" viewBox="0 0 5 4"><path d="M0.3 0.5h4.4l-2.2 2.8z" fill="#f2f2f2"/></svg>
<div style="left:516px;top:646px;width:15.5px;height:16px;background:#1e90e2;"></div>
<svg style="left:518.5px;top:648.5px;" width="11" height="11" viewBox="0 0 11 11"><g fill="#e8f6ff"><rect x="0.8" y="0.8" width="2.6" height="2.6"/><rect x="7.4" y="0.8" width="2.6" height="2.6"/><rect x="0.8" y="7.4" width="2.6" height="2.6"/><rect x="7.4" y="7.4" width="2.6" height="2.6"/></g><path d="M3 3l5 5M8 3l-5 5" stroke="#e8f6ff" stroke-width="0.9"/></svg>
<svg style="left:535.5px;top:649px;" width="11" height="11" viewBox="0 0 11 11"><path d="M0.5 0.8h2M4 0.8h2M0.8 3v2" stroke="#bdbdbd" stroke-width="1"/><path d="M4 3l5 5.2-2 0.1 1 2.2-1 0.4-0.9-2.2-1.4 1.1z" fill="#e0e0e0"/></svg>
<svg style="left:558.5px;top:648.5px;" width="11" height="11" viewBox="0 0 11 11"><circle cx="2" cy="8.5" r="1.4" fill="#cfcfcf"/><circle cx="5.5" cy="5.4" r="1.4" fill="#cfcfcf"/><circle cx="5.2" cy="9.2" r="1.2" fill="#cfcfcf"/><rect x="6.5" y="0.6" width="4" height="4" fill="none" stroke="#e8e8e8" stroke-width="1"/></svg>
<div style="left:574.5px;top:646px;width:1px;height:16px;background:#444;"></div>
<svg style="left:584px;top:650px;" width="7" height="8" viewBox="0 0 7 8"><path d="M1 1.5h3.5v4" fill="none" stroke="#4e4e4e" stroke-width="1"/></svg>
<svg style="left:598px;top:650px;" width="7" height="8" viewBox="0 0 7 8"><path d="M1 1.5h3.5v4" fill="none" stroke="#4e4e4e" stroke-width="1"/></svg>
<svg style="left:616px;top:648.5px;" width="12" height="11" viewBox="0 0 12 11"><path d="M2.5 0.5v4M0.5 2.5h4" stroke="#a0a0a0" stroke-width="0.9"/><path d="M3 6l3 3 4-3M6 6.5l4 3" stroke="#777" stroke-width="0.8" fill="none"/></svg>
<svg style="left:1100px;top:648px;" width="6" height="10.5" viewBox="0 0 6 10.5"><path d="M0.5 0.5h5v5l-2.5 2.4-2.5-2.4z" fill="#f2f2f2"/><rect x="2.4" y="7.6" width="1.2" height="2.6" fill="#f2f2f2"/><rect x="2" y="1.6" width="2" height="2" fill="#393939"/></svg>
<span style="left:1111.8px;top:648.3px;font-size:7.61px;line-height:12px;color:#dcdcdc;">00:00:00;00</span>
<svg style="left:1163px;top:650px;" width="7" height="7" viewBox="0 0 7 7"><path d="M0.5 0.5h6v6z" fill="#c9b861"/></svg>
<svg style="left:1224.5px;top:649.5px;" width="10" height="9" viewBox="0 0 10 9"><path d="M0.5 8.5v-7l1.5-1M9.5 8.5v-7l-1.5-1M0.5 8.5h9M3 1h4" fill="none" stroke="#b9b17e" stroke-width="1.1"/></svg>
<span style="left:1237.5px;top:648.3px;font-size:7.67px;line-height:12px;color:#585858;">00:00:05;22</span>
<span style="left:1140.3px;top:666.5px;font-size:7.25px;line-height:12px;color:#c6c6c6;">Record Time (2 channels): 41:17:05</span>
<div style="left:0px;top:678.5px;width:1280px;height:27px;background:linear-gradient(90deg,#1b2b38 0%,#1c2f3e 50%,#1a2a36 100%);"></div>
<div style="left:0px;top:705.5px;width:1280px;height:14.5px;background:#000000;"></div>
<div style="left:31px;top:679px;width:230.5px;height:26.5px;background:#353535;border-top:1px solid #4a4a4a;box-sizing:border-box;"></div>
<svg style="left:9px;top:686.5px;" width="12" height="12" viewBox="0 0 12 12"><path d="M0 1.7l4.9-0.7v4.7h-4.9zM5.6 0.9l6.2-0.9v5.7h-6.2zM0 6.4h4.9v4.7l-4.9-0.7zM5.6 6.4h6.2v5.6l-6.2-0.9z" fill="#f2f2f2"/></svg>
<svg style="left:38.5px;top:686.5px;" width="12" height="12" viewBox="0 0 12 12"><circle cx="7.4" cy="4.6" r="3.6" fill="none" stroke="#d8d8d8" stroke-width="1.1"/><path d="M4.8 7.4L0.8 11.4" stroke="#d8d8d8" stroke-width="1.2"/></svg>
<span style="left:58px;top:686.5px;font-size:9.67px;line-height:12px;color:#d2d2d2;">Type here to search</span>
<svg style="left:270.5px;top:686px;" width="13" height="13" viewBox="0 0 13 13"><circle cx="6.5" cy="6.5" r="4.8" fill="none" stroke="#f4f4f4" stroke-width="1.5"/></svg>
<svg style="left:303px;top:686.5px;" width="13" height="11" viewBox="0 0 13 11"><rect x="2.2" y="1.8" width="6.6" height="7.2" fill="none" stroke="#f2f2f2" stroke-width="1.1"/><path d="M0.5 0.5v10M10.8 0.5v3M10.8 7.5v3M9.5 5.5h3" stroke="#f2f2f2" stroke-width="1"/></svg>
<svg style="left:334.5px;top:683.5px;" width="18" height="18" viewBox="0 0 18 18"><defs><linearGradient id="edg" x1="0" y1="0" x2="1" y2="1"><stop offset="0" stop-color="#35c1f1"/><stop offset="0.55" stop-color="#1b7fd4"/><stop offset="1" stop-color="#0c59a4"/></linearGradient></defs><circle cx="9" cy="9" r="8.3" fill="url(#edg)"/><path d="M1 10c1-6 7-8.5 12-6.5 2.5 1 3.8 3.2 3.9 5.5h-9.5c0 2.5 2.5 4.6 6.5 3.4-1.8 3-5.5 4.3-8.7 3.2-2.8-1-4.5-3.4-4.2-5.6z" fill="#3ddc84" opacity="0.55"/><path d="M7 9c0-2 1.6-3.4 3.6-3.4 2.2 0 3.4 1.4 3.4 3.4z" fill="#1c2c3a"/></svg>
<svg style="left:368.5px;top:685px;" width="16" height="14" viewBox="0 0 16 14"><path d="M0.5 1h5.5l1.3 1.6h8.2v10.9h-15z" fill="#f4c84a"/><path d="M0.5 4.6h15v8.9h-15z" fill="#f8d768"/><rect x="4" y="8.5" width="8" height="4.2" fill="#4a90d8"/><rect x="5.5" y="10" width="5" height="2.7" fill="#f8d768"/></svg>
<div style="left:363px;top:703.5px;width:27px;height:2px;background:#76b9ed;"></div>
<svg style="left:400.5px;top:685.5px;" width="18" height="14" viewBox="0 0 18 14"><path d="M0.5 5l8.5-4.5 8.5 4.5v8.5h-17z" fill="#2488d8"/><path d="M0.5 5l8.5 5 8.5-5" fill="none" stroke="#8cd0ff" stroke-width="1.1"/><path d="M2.5 4.2l6.5-3.4 6.5 3.4-6.5 4z" fill="#6cc4f8"/></svg>
<svg style="left:433px;top:683.5px;" width="17" height="17" viewBox="0 0 17 17"><rect x="0.5" y="0.5" width="16" height="16" rx="2.5" fill="#f4f4f4"/><rect x="3" y="6" width="11" height="3" fill="#c8202c"/><rect x="4" y="9.8" width="9" height="5" fill="#c8202c"/><rect x="7.7" y="6" width="1.6" height="9" fill="#f4f4f4"/><path d="M8.5 5.6c-2.5-3.6-5-1.2-3 0zM8.5 5.6c2.5-3.6 5-1.2 3 0z" fill="none" stroke="#c8202c" stroke-width="1.1"/></svg>
<svg style="left:466px;top:683.5px;" width="17" height="17" viewBox="0 0 17 17"><ellipse cx="8.5" cy="8.5" rx="7.8" ry="8" fill="#e0202c"/><ellipse cx="8.5" cy="8.5" rx="3.4" ry="5.6" fill="#1c2c3a"/><path d="M11 3.2c3 2 3 8.6 0 10.6 4-0.6 5.2-3 5.2-5.3s-1.2-4.7-5.2-5.3z" fill="#a81420"/></svg>
<svg style="left:499px;top:683.5px;" width="17" height="17" viewBox="0 0 17 17"><rect x="0.7" y="0.7" width="15.6" height="15.6" fill="#0b1a2c" stroke="#2d8fd8" stroke-width="1.3"/><text x="8" y="13" font-family="Liberation Sans,sans-serif" font-size="12.5" font-weight="bold" text-anchor="middle" fill="#3ea6f0">V</text></svg>
<svg style="left:531.5px;top:683.5px;" width="17" height="17" viewBox="0 0 17 17"><circle cx="8.5" cy="8.5" r="8" fill="#e84a3c"/><path d="M8.5 8.5L1.6 4.5A8 8 0 0 0 7 16.4z" fill="#34a853"/><path d="M8.5 8.5L7 16.4A8 8 0 0 0 16.5 8.5h-8z" fill="#fbc116"/><path d="M8.5 8.5h8A8 8 0 0 0 15.4 4.5z" fill="#e84a3c"/><circle cx="8.5" cy="8.5" r="3.6" fill="#f4f4f4"/><circle cx="8.5" cy="8.5" r="2.8" fill="#4a8af4"/></svg>
<div style="left:527px;top:703.5px;width:27px;height:2px;background:#76b9ed;"></div>
<svg style="left:564.5px;top:683.5px;" width="17" height="17" viewBox="0 0 17 17"><circle cx="8.5" cy="8.5" r="7.4" fill="#141414" stroke="#f2f2f2" stroke-width="1.5"/><circle cx="8.5" cy="8.5" r="4.4" fill="#e82030"/></svg>
<div style="left:560px;top:703.5px;width:27px;height:2px;background:#76b9ed;"></div>
<svg style="left:598px;top:684.5px;" width="15" height="15" viewBox="0 0 15 15"><g transform="rotate(-18 7.5 7.5)"><rect x="1.5" y="3" width="12" height="9.5" fill="#6f7780"/><rect x="3" y="6" width="9" height="5" fill="#3a4048"/><path d="M1.5 3h12v2.2h-12z" fill="#c8ccd0"/><path d="M3 3l1.5 2.2M6 3l1.5 2.2M9 3l1.5 2.2M12 3l1.5 2.2" stroke="#444" stroke-width="0.9"/></g></svg>
<svg style="left:631px;top:683.5px;" width="17" height="17" viewBox="0 0 17 17"><rect x="0.7" y="0.7" width="15.6" height="15.6" fill="#0b1a2c" stroke="#2d8fd8" stroke-width="1.3"/><text x="8" y="13" font-family="Liberation Sans,sans-serif" font-size="12.5" font-weight="bold" text-anchor="middle" fill="#3ea6f0">V</text><rect x="12" y="11" width="3" height="3" fill="#3ea6f0"/></svg>
<div style="left:625px;top:703.5px;width:27px;height:2px;background:#76b9ed;"></div>
<div style="left:656px;top:679px;width:31.5px;height:26.5px;background:#3b5062;"></div>
<svg style="left:663.5px;top:683.5px;" width="17" height="17" viewBox="0 0 17 17"><rect x="0.7" y="0.7" width="15.6" height="15.6" fill="#0b1a2c" stroke="#2d8fd8" stroke-width="1.3"/><text x="8" y="13" font-family="Liberation Sans,sans-serif" font-size="12.5" font-weight="bold" text-anchor="middle" fill="#3ea6f0">V</text><rect x="12" y="11" width="3" height="3" fill="#3ea6f0"/></svg>
<div style="left:656px;top:703.5px;width:31.5px;height:2px;background:#86c4f2;"></div>
<svg style="left:1097px;top:688px;" width="10" height="7" viewBox="0 0 10 7"><path d="M0.8 6l4.2-4.6 4.2 4.6" fill="none" stroke="#f2f2f2" stroke-width="1.1"/></svg>
<svg style="left:1113px;top:685.5px;" width="11" height="13" viewBox="0 0 11 13"><rect x="1" y="3.4" width="6" height="6.4" rx="1" fill="none" stroke="#f2f2f2" stroke-width="1.1"/><path d="M7 6l2.8-1.6v4.6l-2.8-1.6" fill="none" stroke="#f2f2f2" stroke-width="1"/><path d="M2.2 1.4a4 4 0 0 1 4 0M2.2 12a4 4 0 0 0 4 0" fill="none" stroke="#f2f2f2" stroke-width="0.9"/></svg>
<svg style="left:1128px;top:687.5px;" width="12" height="8" viewBox="0 0 12 8"><path d="M2.8 7.5a2.4 2.4 0 0 1 0.2-4.8 3.2 3.2 0 0 1 6-0.4 2.7 2.7 0 0 1 0.4 5.2z" fill="#f2f2f2"/></svg>
<svg style="left:1145.5px;top:685px;" width="8" height="14" viewBox="0 0 8 14"><rect x="2.2" y="0.5" width="3.6" height="8" rx="1.8" fill="#f2f2f2"/><path d="M0.6 6.5a3.4 3.4 0 0 0 6.8 0M4 10v2.6M2 13h4" fill="none" stroke="#f2f2f2" stroke-width="1"/></svg>
<svg style="left:1160px;top:686.5px;" width="12" height="10" viewBox="0 0 12 10"><rect x="1.5" y="2" width="9" height="5" fill="none" stroke="#f2f2f2" stroke-width="1"/><rect x="0" y="0.5" width="3.5" height="3.5" fill="#f2f2f2"/><rect x="3" y="3.4" width="6" height="2.2" fill="#f2f2f2"/></svg>
<svg style="left:1177.5px;top:686.5px;" width="11" height="11" viewBox="0 0 11 11"><path d="M1 10a9 9 0 0 1 9-9M3.6 10a6.4 6.4 0 0 1 6.4-6.4M6.2 10a3.8 3.8 0 0 1 3.8-3.8" fill="none" stroke="#9aa4ac" stroke-width="1.1"/><circle cx="9.4" cy="9.6" r="1" fill="#9aa4ac"/></svg>
<svg style="left:1191.5px;top:686.5px;" width="11" height="11" viewBox="0 0 11 11"><path d="M0.6 3.8h2l2.8-2.6v8.6l-2.8-2.6h-2z" fill="none" stroke="#f2f2f2" stroke-width="1"/><path d="M7 3.4a3 3 0 0 1 0 4.2M8.6 1.8a5.4 5.4 0 0 1 0 7.4" fill="none" stroke="#f2f2f2" stroke-width="0.9"/></svg>
<span style="left:1212.5px;top:680.0px;font-size:7.65px;line-height:12px;color:#f0f0f0;">4:33 PM</span>
<span style="left:1209px;top:691.2px;font-size:7.87px;line-height:12px;color:#e8e8e8;">2/27/2021</span>
<svg style="left:1256.5px;top:686px;" width="12" height="12" viewBox="0 0 12 12"><path d="M0.6 0.6h10.8v8h-3v2.8l-2.8-2.8h-5z" fill="none" stroke="#f2f2f2" stroke-width="1.1"/><path d="M2.8 3.2h6.4M2.8 5.6h6.4" stroke="#f2f2f2" stroke-width="0.9"/></svg>
<div style="left:241.5px;top:91.5px;width:563.5px;height:465.5px;background:#454545;border-left:1px solid #585858;border-bottom:1px solid #3a3a3a;box-sizing:border-box;box-shadow:0 0 2px rgba(0,0,0,0.35);"></div>
<div style="left:242.5px;top:92px;width:562.5px;height:21.5px;background:#0865b6;"></div>
<span style="left:246.5px;top:96.0px;font-size:7.58px;line-height:12px;color:#ffffff;">Video Event FX</span>
<div style="left:792px;top:97px;width:12px;height:13px;background:#e04a5c;"></div>
<svg style="left:795px;top:100.5px;" width="6" height="6" viewBox="0 0 6 6"><path d="M1 1l4 4M5 1l-4 4" stroke="#fff" stroke-width="1.3"/></svg>
<div style="left:244px;top:116px;width:21px;height:15px;background:#5a76b8;"></div>
<svg style="left:245px;top:118px;" width="12" height="12" viewBox="0 0 12 12"><rect x="1" y="1" width="1.5" height="1.5" fill="#fff"/><rect x="1" y="4" width="1.5" height="1.5" fill="#dfe6ff"/><rect x="3.5" y="6" width="5" height="5" fill="#fff"/><rect x="5" y="7.5" width="2" height="2" fill="#5a76b8"/></svg>
<div style="left:266px;top:116px;width:480px;height:15px;background:#545454;"></div>
<span style="left:270px;top:117.5px;font-size:7.7px;line-height:12px;color:#f4f4f4;font-weight:bold;">Video Event FX:</span>
<span style="left:334px;top:117.5px;font-size:7.49px;line-height:12px;color:#dcdcdc;">Klasky Csupo Robot Logo-(You2Audio.Com)</span>
<div style="left:751px;top:117px;width:16.5px;height:13.5px;background:#1e9ff0;"></div>
<svg style="left:755px;top:119.5px;" width="8" height="9" viewBox="0 0 8 9"><rect x="1.5" y="1" width="5" height="7" fill="none" stroke="#1577c0" stroke-width="1"/><path d="M3 3.5h2M3 5.5h2" stroke="#1577c0"/></svg>
<svg style="left:772px;top:120px;" width="10" height="8" viewBox="0 0 10 8"><path d="M1 1.5h3M5.5 1.5h3.5M1 4h3M5.5 4h3.5M1 6.5h8" stroke="#5a5a5a" stroke-width="0.9"/></svg>
<svg style="left:788px;top:120px;" width="10" height="8" viewBox="0 0 10 8"><path d="M1 1.5h3M5.5 1.5h3.5M1 4h3M5.5 4h3.5M1 6.5h8" stroke="#5a5a5a" stroke-width="0.9"/></svg>
<svg style="left:243.5px;top:137px;" width="9" height="8" viewBox="0 0 9 8"><circle cx="3" cy="4" r="2" fill="none" stroke="#c8c8c8" stroke-width="0.9"/><path d="M5 4h4" stroke="#c8c8c8" stroke-width="0.9"/></svg>
<div style="left:251.5px;top:134px;width:38.5px;height:14.5px;background:#3d3d3d;border:1px solid #5a5a5a;box-sizing:border-box;"></div>
<span style="left:255px;top:135.5px;font-size:7.34px;line-height:12px;color:#d0d0d0;">Pan/Crop</span>
<div style="left:290px;top:141px;width:5px;height:1px;background:#bbb;"></div>
<div style="left:294.5px;top:134px;width:67.5px;height:14.5px;background:#18a2f2;"></div>
<div style="left:297px;top:137px;width:8.5px;height:8.5px;background:#ffffff;border:0.7px solid #336;box-sizing:border-box;"></div>
<svg style="left:297.5px;top:137px;" width="8" height="8" viewBox="0 0 8 8"><path d="M1.5 4l1.8 2.2L6.5 1.5" fill="none" stroke="#c81020" stroke-width="1.5"/></svg>
<span style="left:311.5px;top:135.5px;font-size:7.51px;line-height:12px;color:#8fd6ff;">Gradient Map</span>
<svg style="left:362px;top:137px;" width="10" height="8" viewBox="0 0 10 8"><path d="M0 4h4" stroke="#c8c8c8" stroke-width="0.9"/><circle cx="6.2" cy="4" r="2" fill="none" stroke="#c8c8c8" stroke-width="0.9"/></svg>
<svg style="left:771.5px;top:135px;" width="12" height="13" viewBox="0 0 12 13"><text x="0" y="9" font-family="Liberation Serif,serif" font-style="italic" font-size="12" fill="#e0e0e0">f</text><path d="M4.5 5.5l3.5 4M8 5.5l-3.5 4" stroke="#e0e0e0" stroke-width="0.9"/><path d="M7 10l3 2.5" stroke="#e0e0e0" stroke-width="1.2"/></svg>
<svg style="left:788.5px;top:135px;" width="12" height="13" viewBox="0 0 12 13"><text x="0" y="9" font-family="Liberation Serif,serif" font-style="italic" font-size="12" fill="#e0e0e0">f</text><path d="M4.5 5.5l3.5 4M8 5.5l-3.5 4" stroke="#e0e0e0" stroke-width="0.9"/><path d="M7.5 9.5l2.5 2.5M10 9.5l-2.5 2.5" stroke="#e0e0e0" stroke-width="1"/></svg>
<span style="left:247px;top:154.0px;font-size:7.26px;line-height:12px;color:#dcdcdc;">Preset:</span>
<div style="left:296px;top:153px;width:468.5px;height:14px;background:#2f2f2f;"></div>
<span style="left:298px;top:154.0px;font-size:6.59px;line-height:12px;color:#f0f0f0;">AHPGAMER2021 VOCODER</span>
<svg style="left:754.5px;top:158px;" width="6" height="4" viewBox="0 0 6 4"><path d="M0.3 0.5h5.4l-2.7 3.2z" fill="#f0f0f0"/></svg>
<svg style="left:771.5px;top:155px;" width="10" height="10.5" viewBox="0 0 10 10.5"><path d="M0.5 0.5h8l1 1v8.5h-9z" fill="#e8e8e8"/><rect x="2.2" y="1" width="4.8" height="3.6" fill="#555"/><rect x="2" y="6" width="5.5" height="4" fill="#444"/><rect x="3.3" y="6.6" width="1.8" height="3.4" fill="#e8e8e8"/></svg>
<svg style="left:789.5px;top:155.5px;" width="9" height="9" viewBox="0 0 9 9"><path d="M1 1l7 7M8 1l-7 7" stroke="#d68a9c" stroke-width="1.2"/></svg>
<div style="left:246px;top:538.5px;width:49px;height:15.5px;background:#3b3b3b;border:1px solid #3e9bd8;box-sizing:border-box;"></div>
<span style="left:258px;top:540.5px;font-size:7.36px;line-height:12px;color:#e0e0e0;">Animate</span>
<div style="left:243.5px;top:171px;width:228px;height:184.5px;background:#f1f1f1;"></div>
<div style="left:244px;top:172px;width:227px;height:14.5px;background:#9a9a9a;"></div>
<span style="left:246.5px;top:173.5px;font-size:8.06px;line-height:12px;color:#f6f6f6;font-weight:bold;">Gradient Map</span>
<span style="left:441.5px;top:173.5px;font-size:6.31px;line-height:12px;color:#f0f0f0;">About</span>
<span style="left:463.5px;top:173.5px;font-size:7px;line-height:12px;color:#f0f0f0;">?</span>
<div style="left:247.5px;top:194px;width:221px;height:20.5px;background:linear-gradient(90deg,#2a12c8 0%,#1a3ae0 12%,#10b8f0 22%,#14e6ee 27%,#48d0c8 32%,#a07068 40%,#de2026 47%,#e81822 50%,#c8242c 55%,#48506c 63%,#10808c 68%,#009c8c 72%,#08a868 80%,#10c830 90%,#14e214 100%);"></div>
<div style="left:247.5px;top:194px;width:221px;height:20.5px;overflow:hidden">
<svg style="left:-5.5px;top:3.5px;" width="12" height="12" viewBox="0 0 12 12"><circle cx="6" cy="6" r="4.8" fill="#fff" stroke="#222" stroke-width="0.8"/><text x="8" y="8.3" font-size="6.5" font-family="Liberation Sans,sans-serif" text-anchor="middle" fill="#222">0</text></svg>
<svg style="left:215px;top:3.5px;" width="12" height="12" viewBox="0 0 12 12"><circle cx="6" cy="6" r="4.8" fill="#fff" stroke="#222" stroke-width="0.8"/><text x="4.2" y="8.3" font-size="6.5" font-family="Liberation Sans,sans-serif" text-anchor="middle" fill="#222">2</text></svg>
</div>
<svg style="left:301.3px;top:197.5px;" width="12" height="12" viewBox="0 0 12 12"><circle cx="6" cy="6" r="4.8" fill="#ffffff" stroke="#222" stroke-width="0.8"/><text x="6" y="8.3" font-size="6.5" font-family="Liberation Sans,sans-serif" font-weight="bold" text-anchor="middle" fill="#222">3</text></svg>
<svg style="left:351.8px;top:197.5px;" width="12" height="12" viewBox="0 0 12 12"><circle cx="6" cy="6" r="4.8" fill="#1a72c8" stroke="#fff" stroke-width="1" stroke-dasharray="1.5 1"/><text x="6" y="8.3" font-size="6.5" font-family="Liberation Sans,sans-serif" font-weight="bold" text-anchor="middle" fill="#ffffff">1</text></svg>
<svg style="left:401.3px;top:197.5px;" width="12" height="12" viewBox="0 0 12 12"><circle cx="6" cy="6" r="4.8" fill="#ffffff" stroke="#222" stroke-width="0.8"/><text x="6" y="8.3" font-size="6.5" font-family="Liberation Sans,sans-serif" font-weight="bold" text-anchor="middle" fill="#222">4</text></svg>
<svg style="left:248.5px;top:219px;" width="12" height="12" viewBox="0 0 12 12"><circle cx="6" cy="6" r="5" fill="#f6f6f6" stroke="#333" stroke-width="0.8"/><path d="M3.4 6h5.2M6 3.4v5.2" stroke="#111" stroke-width="1.5"/></svg>
<svg style="left:263.9px;top:219px;" width="12" height="12" viewBox="0 0 12 12"><circle cx="6" cy="6" r="5" fill="#f6f6f6" stroke="#333" stroke-width="0.8"/><path d="M3.6 6h4.8" stroke="#111" stroke-width="1.3"/></svg>
<svg style="left:279.3px;top:219px;" width="12" height="12" viewBox="0 0 12 12"><circle cx="6" cy="6" r="5" fill="#f6f6f6" stroke="#333" stroke-width="0.8"/><path d="M2.6 6l3-2.6v1.7h4v1.8h-4v1.7z" fill="#111"/></svg>
<svg style="left:294.7px;top:219px;" width="12" height="12" viewBox="0 0 12 12"><circle cx="6" cy="6" r="5" fill="#f6f6f6" stroke="#333" stroke-width="0.8"/><path d="M9.4 6l-3-2.6v1.7h-4v1.8h4v1.7z" fill="#111"/></svg>
<svg style="left:310.1px;top:219px;" width="12" height="12" viewBox="0 0 12 12"><circle cx="6" cy="6" r="5" fill="#f6f6f6" stroke="#333" stroke-width="0.8"/><path d="M3 4v4M4.6 4v4M6.2 4v4M7 6h2.8M8.6 4.6L10 6 8.6 7.4" stroke="#111" stroke-width="0.9" fill="none"/></svg>
<svg style="left:325.5px;top:219px;" width="12" height="12" viewBox="0 0 12 12"><circle cx="6" cy="6" r="5" fill="#f6f6f6" stroke="#333" stroke-width="0.8"/><path d="M2.6 4.4h4M2.6 6h4M2.6 7.6h4M7 6h2.8M8.6 4.6L10 6 8.6 7.4" stroke="#111" stroke-width="0.9" fill="none"/></svg>
<div style="left:248.5px;top:239.5px;width:10.5px;height:23px;background:linear-gradient(180deg,#d8202c 0%,#d8202c 30%,#e06870 65%,#d89098 100%);"></div>
<svg style="left:248.5px;top:246px;" width="10.5" height="16.5" viewBox="0 0 10.5 16.5"><rect x="0.0" y="0.0" width="2.6" height="2.6" fill="#fff" opacity="0.10"/><rect x="5.2" y="0.0" width="2.6" height="2.6" fill="#fff" opacity="0.10"/><rect x="2.6" y="2.6" width="2.6" height="2.6" fill="#fff" opacity="0.17"/><rect x="7.8" y="2.6" width="2.6" height="2.6" fill="#fff" opacity="0.17"/><rect x="0.0" y="5.2" width="2.6" height="2.6" fill="#fff" opacity="0.24"/><rect x="5.2" y="5.2" width="2.6" height="2.6" fill="#fff" opacity="0.24"/><rect x="2.6" y="7.8" width="2.6" height="2.6" fill="#fff" opacity="0.31"/><rect x="7.8" y="7.8" width="2.6" height="2.6" fill="#fff" opacity="0.31"/><rect x="0.0" y="10.4" width="2.6" height="2.6" fill="#fff" opacity="0.38"/><rect x="5.2" y="10.4" width="2.6" height="2.6" fill="#fff" opacity="0.38"/><rect x="2.6" y="13.0" width="2.6" height="2.6" fill="#fff" opacity="0.45"/><rect x="7.8" y="13.0" width="2.6" height="2.6" fill="#fff" opacity="0.45"/><rect x="0.0" y="15.6" width="2.6" height="2.6" fill="#fff" opacity="0.52"/><rect x="5.2" y="15.6" width="2.6" height="2.6" fill="#fff" opacity="0.52"/></svg>
<svg style="left:257.5px;top:236.5px;" width="6" height="8" viewBox="0 0 6 8"><path d="M5 1L1.5 4 5 7z" fill="#fff" stroke="#333" stroke-width="0.8"/></svg>
<span style="left:268.8px;top:235.3px;font-size:6.6px;line-height:12px;color:#333;">R</span>
<div style="left:276.5px;top:238.5px;width:189.5px;height:4px;background:linear-gradient(90deg,#000 0%,#200000 30%,#a00008 65%,#e81820 100%);"></div>
<span style="left:268.8px;top:245.3px;font-size:6.6px;line-height:12px;color:#333;">G</span>
<div style="left:276.5px;top:248.5px;width:189.5px;height:4px;background:linear-gradient(90deg,#c01008 0%,#e04808 30%,#f0a010 60%,#f0f020 100%);"></div>
<span style="left:268.8px;top:255.1px;font-size:6.6px;line-height:12px;color:#333;">B</span>
<div style="left:276.5px;top:258.3px;width:189.5px;height:4px;background:linear-gradient(90deg,#d81018 0%,#e01048 40%,#d810a0 75%,#c818e8 100%);"></div>
<svg style="left:439.5px;top:241.5px;" width="8" height="6.5" viewBox="0 0 8 6.5"><path d="M4 0.8L7.2 5.6H0.8z" fill="#fdf6d8" stroke="#333" stroke-width="0.8"/></svg>
<svg style="left:272.5px;top:251.5px;" width="8" height="6.5" viewBox="0 0 8 6.5"><path d="M4 0.8L7.2 5.6H0.8z" fill="#fdf6d8" stroke="#333" stroke-width="0.8"/></svg>
<svg style="left:272.5px;top:261.3px;" width="8" height="6.5" viewBox="0 0 8 6.5"><path d="M4 0.8L7.2 5.6H0.8z" fill="#fdf6d8" stroke="#333" stroke-width="0.8"/></svg>
<div style="left:276.5px;top:270.5px;width:189.5px;height:20.5px;background:linear-gradient(180deg,rgba(255,255,255,0.9) 0%,rgba(255,255,255,0.25) 20%,rgba(255,255,255,0) 36%,rgba(0,0,0,0) 38%,rgba(0,0,0,0.55) 72%,rgba(0,0,0,1) 100%),linear-gradient(90deg,#f00 0%,#ff0 17%,#0f0 33%,#0ff 50%,#00f 67%,#f0f 83%,#f00 100%);"></div>
<svg style="left:462.5px;top:276px;" width="6" height="10" viewBox="0 0 6 10"><path d="M3 1v8M1 3l2-2 2 2M1 7l2 2 2-2" fill="none" stroke="#333" stroke-width="0.8"/></svg>
<svg style="left:249px;top:270.5px;" width="10" height="10" viewBox="0 0 10 10"><rect x="0.5" y="0.5" width="9" height="9" fill="#e8e8e8" stroke="#aaa" stroke-width="0.5"/><rect x="1.5" y="1.5" width="2.4" height="3.5" fill="#e8d020"/><rect x="3.9" y="1.5" width="2.4" height="3.5" fill="#30b040"/><rect x="6.3" y="1.5" width="2.4" height="3.5" fill="#d02020"/><rect x="1.5" y="5" width="2.4" height="3.5" fill="#20a0e0"/><rect x="3.9" y="5" width="2.4" height="3.5" fill="#2040d0"/><rect x="6.3" y="5" width="2.4" height="3.5" fill="#e09020"/></svg>
<svg style="left:249px;top:282px;" width="10" height="10" viewBox="0 0 10 10"><rect x="0.5" y="0.5" width="9" height="9" fill="#e4e4e4" stroke="#bbb" stroke-width="0.5"/><path d="M2 8l3.6-3.6" stroke="#222" stroke-width="1.2"/><path d="M5 3l2 2M5.8 4.2l1.8-1.8" stroke="#222" stroke-width="1.8"/></svg>
<span style="left:252.8px;top:296.5px;font-size:6.8px;line-height:12px;color:#333;">R</span>
<div style="left:263.5px;top:295.5px;width:37.5px;height:13px;background:#ffffff;border:1px solid #c2c2c2;box-sizing:border-box;"></div>
<span style="right:983.0px;top:296.5px;font-size:7.2px;line-height:12px;color:#333;">225</span>
<span style="left:307.5px;top:296.5px;font-size:6.8px;line-height:12px;color:#333;">G</span>
<div style="left:318px;top:295.5px;width:37.5px;height:13px;background:#ffffff;border:1px solid #c2c2c2;box-sizing:border-box;"></div>
<span style="right:928.5px;top:296.5px;font-size:7.2px;line-height:12px;color:#333;">0</span>
<span style="left:362px;top:296.5px;font-size:6.8px;line-height:12px;color:#333;">B</span>
<div style="left:372px;top:295.5px;width:37.5px;height:13px;background:#ffffff;border:1px solid #c2c2c2;box-sizing:border-box;"></div>
<span style="right:874.5px;top:296.5px;font-size:7.2px;line-height:12px;color:#333;">0</span>
<span style="left:415.8px;top:296.5px;font-size:6.8px;line-height:12px;color:#333;">A</span>
<div style="left:426px;top:295.5px;width:37.5px;height:13px;background:#ffffff;border:1px solid #c2c2c2;box-sizing:border-box;"></div>
<span style="right:820.5px;top:296.5px;font-size:7.2px;line-height:12px;color:#333;">255</span>
<div style="left:247px;top:315.3px;width:222px;height:1px;background:#dcdcdc;"></div>
<span style="left:247px;top:323.8px;font-size:6.85px;line-height:12px;color:#333;">Amount:</span>
<div style="left:295.5px;top:328.5px;width:130px;height:1.5px;background:#8e8e8e;"></div>
<div style="left:424px;top:323px;width:7.5px;height:12.5px;background:linear-gradient(90deg,#f4f4f4,#c8c8c8);border:1px solid #8a8a8a;box-sizing:border-box;border-radius:1.5px;"></div>
<div style="left:434px;top:323px;width:35px;height:12.5px;background:#ffffff;border:1px solid #c2c2c2;box-sizing:border-box;"></div>
<span style="left:436px;top:323.5px;font-size:8.5px;line-height:12px;color:#333;">1.0000</span>
<span style="left:247px;top:340.5px;font-size:7.02px;line-height:12px;color:#333;">Mode:</span>
<svg style="left:293.5px;top:342.5px;" width="9" height="9" viewBox="0 0 9 9"><circle cx="4.5" cy="4.5" r="3.8" fill="#fff" stroke="#333" stroke-width="0.8"/><circle cx="4.5" cy="4.5" r="2" fill="#222"/></svg>
<span style="left:304.5px;top:341.0px;font-size:7.23px;line-height:12px;color:#222;">Blend</span>
<svg style="left:351px;top:342.5px;" width="9" height="9" viewBox="0 0 9 9"><circle cx="4.5" cy="4.5" r="3.8" fill="#fff" stroke="#333" stroke-width="0.8"/></svg>
<span style="left:362px;top:341.0px;font-size:7.31px;line-height:12px;color:#222;">Add</span>
<svg style="left:530px;top:0" width="220" height="30" viewBox="530 0 220 30">
<defs><filter id="ds" x="-5%" y="-20%" width="110%" height="150%"><feGaussianBlur in="SourceAlpha" stdDeviation="1.1"/><feOffset dx="1" dy="1.3"/><feComponentTransfer><feFuncA type="linear" slope="1.6"/></feComponentTransfer><feMerge><feMergeNode/><feMergeNode in="SourceGraphic"/></feMerge></filter></defs>
<g filter="url(#ds)" font-family="Liberation Sans, sans-serif" font-weight="bold" fill="#fff" stroke="#2a2a2a" stroke-width="1.6" paint-order="stroke" stroke-linejoin="round">
<text x="543" y="19" font-size="15.4" textLength="46.5" lengthAdjust="spacingAndGlyphs">www.</text>
<text x="590" y="19" font-size="15.8" textLength="105" lengthAdjust="spacingAndGlyphs">BANDICAM</text>
<text x="696.5" y="19" font-size="13.4" textLength="39" lengthAdjust="spacingAndGlyphs">.com</text>
</g></svg>
<svg style="left:1155px;top:688px" width="125" height="32" viewBox="1155 688 125 32">
<circle cx="1171.4" cy="704" r="9.4" fill="#fff"/>
<circle cx="1171.4" cy="704" r="7.7" fill="#0c0c0c"/>
<circle cx="1171.4" cy="704" r="4.6" fill="#e03038"/>
<g font-family="Liberation Sans, sans-serif" font-weight="bold" font-size="10.6" stroke="#fff" stroke-width="3.2" paint-order="stroke" stroke-linejoin="round">
<text x="1187" y="708.2" fill="#0a0a0a" textLength="47.5" lengthAdjust="spacingAndGlyphs">BANDI</text>
<text x="1235.3" y="708.2" fill="#e0464e" textLength="30.5" lengthAdjust="spacingAndGlyphs">CAM</text>
</g></svg>
</div>
<svg style="left:550px;top:270px" width="180" height="180" viewBox="550 270 180 180">
<defs><radialGradient id="sh" cx="0.5" cy="0.5" r="0.5"><stop offset="0.86" stop-color="#000" stop-opacity="0.35"/><stop offset="1" stop-color="#000" stop-opacity="0"/></radialGradient></defs>
<circle cx="640.5" cy="361" r="84" fill="url(#sh)"/>
<circle cx="640.5" cy="360" r="73.3" fill="#ffffff"/>
<circle cx="640.4" cy="359.8" r="63.4" fill="#4ea6ea"/>
<path d="M623 328.800L667.700 360L623 391.200z" fill="#ffffff" stroke="#fff" stroke-width="7" stroke-linejoin="round"/>
</svg>
</body></html>
